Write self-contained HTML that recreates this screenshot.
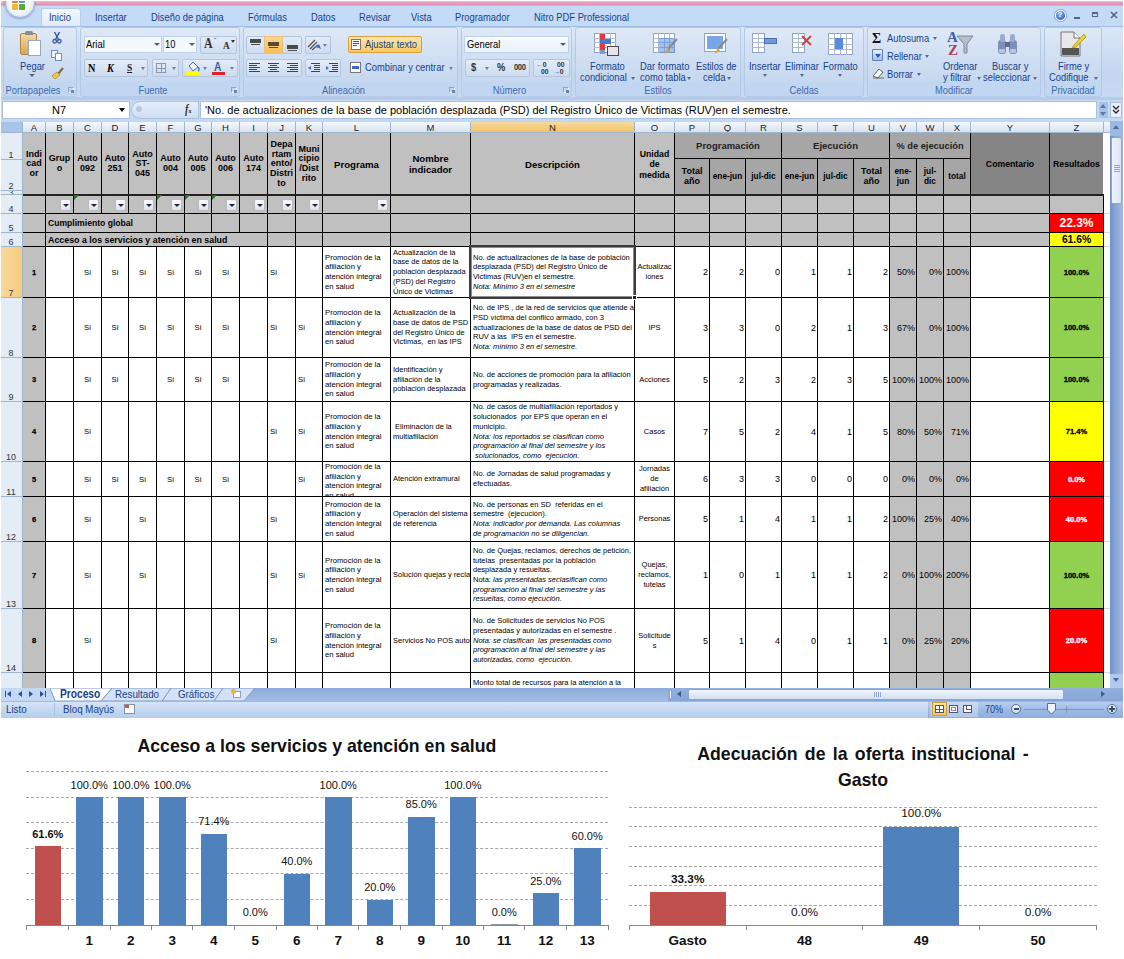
<!DOCTYPE html>
<html><head><meta charset="utf-8"><title>Excel</title><style>
html,body{margin:0;padding:0;}
body{width:1124px;height:959px;background:#fff;overflow:hidden;position:relative;font-family:"Liberation Sans",sans-serif;}
#w{position:absolute;left:0;top:0;width:1124px;height:959px;overflow:hidden;}
.b{position:absolute;}
.t{position:absolute;white-space:nowrap;line-height:1.2;}
.gl{height:0;border-top:1px dashed #a6a6a6;}
.rt{transform:scaleX(.85);transform-origin:0 50%;}
.rc{transform:scaleX(.85);transform-origin:50% 50%;}
.c{position:absolute;overflow:hidden;display:flex;align-items:center;color:#000;box-sizing:border-box;}
.c.hc{justify-content:center;text-align:center;}
.c.hh{padding-top:1.5px;}
.c.l{justify-content:flex-start;text-align:left;}
.c.rr{justify-content:flex-end;text-align:right;}
.c.colh{align-items:center;}
.c.rowh{justify-content:center;align-items:flex-end;}
.fb{position:absolute;width:11px;height:12px;box-sizing:border-box;border:1px solid #b8bcc4;border-radius:2px;background:linear-gradient(#fbfbfc,#dfe2e8);}
.fb i{position:absolute;left:1.5px;top:3.5px;width:0;height:0;border-left:3px solid transparent;border-right:3px solid transparent;border-top:3.5px solid #1c2340;}
</style></head><body><div id="w">
<div class="b" style="left:0px;top:0px;width:1124px;height:718px;background:#bfd7f5;"></div>
<div class="b" style="left:0px;top:0px;width:1124px;height:5.5px;background:linear-gradient(#f6dbe6,#eaa6c3 35%,#e292b6 75%,#dcb6d6);"></div>
<div class="b" style="left:0px;top:5.5px;width:1124px;height:20.5px;background:#c4dbf8;"></div>
<div class="b" style="left:5px;top:-12px;width:28px;height:28px;border-radius:50%;background:radial-gradient(circle at 50% 45%,#ffffff,#f1f5fb 55%,#c3d3ea);border:1px solid #9fb4d4;box-shadow:0 1px 2px rgba(80,100,140,.5)"></div>
<div class="b" style="left:12px;top:4px;width:6px;height:6px;background:#f0b33a;border-radius:1px"></div>
<div class="b" style="left:19px;top:4px;width:6px;height:6px;background:#5fa83c;border-radius:1px"></div>
<div class="b" style="left:12px;top:-3px;width:6px;height:6px;background:#e4812a;border-radius:1px"></div>
<div class="b" style="left:19px;top:-3px;width:6px;height:6px;background:#5f8fd0;border-radius:1px"></div>
<div class="b" style="left:41px;top:8px;width:40px;height:18px;background:linear-gradient(#f3f7fd,#e1ebf8);border:1px solid #b7cde9;border-bottom:none;border-radius:3px 3px 0 0;box-sizing:border-box;"></div>
<div class="t rt" style="left:49px;top:11px;font-size:11px;color:#15428b;">Inicio</div>
<div class="t rt" style="left:95px;top:11px;font-size:11px;color:#15428b;">Insertar</div>
<div class="t rt" style="left:151px;top:11px;font-size:11px;color:#15428b;">Diseño de página</div>
<div class="t rt" style="left:248px;top:11px;font-size:11px;color:#15428b;">Fórmulas</div>
<div class="t rt" style="left:311px;top:11px;font-size:11px;color:#15428b;">Datos</div>
<div class="t rt" style="left:359px;top:11px;font-size:11px;color:#15428b;">Revisar</div>
<div class="t rt" style="left:411px;top:11px;font-size:11px;color:#15428b;">Vista</div>
<div class="t rt" style="left:455px;top:11px;font-size:11px;color:#15428b;">Programador</div>
<div class="t rt" style="left:534px;top:11px;font-size:11px;color:#15428b;">Nitro PDF Professional</div>
<div class="b" style="left:1055px;top:10px;width:9px;height:9px;border-radius:50%;background:radial-gradient(circle at 40% 35%,#7fb2f0,#1f55c0);border:1px solid #fff;box-shadow:0 0 0 1px #8aa8d8"></div>
<div class="t" style="left:1057.5px;top:9.5px;font-size:8px;font-weight:bold;color:#fff;">?</div>
<div class="b" style="left:1074px;top:17px;width:6px;height:2px;background:#55657f;"></div>
<div class="b" style="left:1092px;top:12px;width:6px;height:5px;border:1px solid #55657f;border-top:2px solid #55657f;box-sizing:border-box;background:transparent"></div>
<svg class="b" style="left:1110px;top:11px" width="8" height="8"><path d="M1 1L7 7M7 1L1 7" stroke="#55657f" stroke-width="1.6"/></svg>
<div class="b" style="left:0px;top:26px;width:1124px;height:72px;background:linear-gradient(#dbe7f7,#cfdff3 30%,#c3d6ef 70%,#c9dbf2);border-top:1px solid #9dbbe2;"></div>
<div class="b" style="left:0px;top:97px;width:1124px;height:3px;background:#b5cbe8;"></div>
<div class="b" style="left:3px;top:27px;width:74px;height:70px;border:1px solid #b4c9e6;border-radius:3px;background:linear-gradient(#dfe9f7,#d2e0f3 40%,#c6d8ef 78%,#c2d6f0 79%,#c2d6f0);box-sizing:border-box;"></div>
<div class="b" style="left:4px;top:84px;width:72px;height:11px;background:#c1d6f1;border-radius:0 0 3px 3px;"></div>
<div class="t rc" style="left:-4px;top:84px;width:74px;text-align:center;font-size:11px;color:#3e6aaa;">Portapapeles</div>
<div class="b" style="left:80px;top:27px;width:160px;height:70px;border:1px solid #b4c9e6;border-radius:3px;background:linear-gradient(#dfe9f7,#d2e0f3 40%,#c6d8ef 78%,#c2d6f0 79%,#c2d6f0);box-sizing:border-box;"></div>
<div class="b" style="left:81px;top:84px;width:158px;height:11px;background:#c1d6f1;border-radius:0 0 3px 3px;"></div>
<div class="t rc" style="left:73px;top:84px;width:160px;text-align:center;font-size:11px;color:#3e6aaa;">Fuente</div>
<div class="b" style="left:243px;top:27px;width:215px;height:70px;border:1px solid #b4c9e6;border-radius:3px;background:linear-gradient(#dfe9f7,#d2e0f3 40%,#c6d8ef 78%,#c2d6f0 79%,#c2d6f0);box-sizing:border-box;"></div>
<div class="b" style="left:244px;top:84px;width:213px;height:11px;background:#c1d6f1;border-radius:0 0 3px 3px;"></div>
<div class="t rc" style="left:236px;top:84px;width:215px;text-align:center;font-size:11px;color:#3e6aaa;">Alineación</div>
<div class="b" style="left:461px;top:27px;width:111px;height:70px;border:1px solid #b4c9e6;border-radius:3px;background:linear-gradient(#dfe9f7,#d2e0f3 40%,#c6d8ef 78%,#c2d6f0 79%,#c2d6f0);box-sizing:border-box;"></div>
<div class="b" style="left:462px;top:84px;width:109px;height:11px;background:#c1d6f1;border-radius:0 0 3px 3px;"></div>
<div class="t rc" style="left:454px;top:84px;width:111px;text-align:center;font-size:11px;color:#3e6aaa;">Número</div>
<div class="b" style="left:575px;top:27px;width:166px;height:70px;border:1px solid #b4c9e6;border-radius:3px;background:linear-gradient(#dfe9f7,#d2e0f3 40%,#c6d8ef 78%,#c2d6f0 79%,#c2d6f0);box-sizing:border-box;"></div>
<div class="b" style="left:576px;top:84px;width:164px;height:11px;background:#c1d6f1;border-radius:0 0 3px 3px;"></div>
<div class="t rc" style="left:575px;top:84px;width:166px;text-align:center;font-size:11px;color:#3e6aaa;">Estilos</div>
<div class="b" style="left:744px;top:27px;width:120px;height:70px;border:1px solid #b4c9e6;border-radius:3px;background:linear-gradient(#dfe9f7,#d2e0f3 40%,#c6d8ef 78%,#c2d6f0 79%,#c2d6f0);box-sizing:border-box;"></div>
<div class="b" style="left:745px;top:84px;width:118px;height:11px;background:#c1d6f1;border-radius:0 0 3px 3px;"></div>
<div class="t rc" style="left:744px;top:84px;width:120px;text-align:center;font-size:11px;color:#3e6aaa;">Celdas</div>
<div class="b" style="left:867px;top:27px;width:174px;height:70px;border:1px solid #b4c9e6;border-radius:3px;background:linear-gradient(#dfe9f7,#d2e0f3 40%,#c6d8ef 78%,#c2d6f0 79%,#c2d6f0);box-sizing:border-box;"></div>
<div class="b" style="left:868px;top:84px;width:172px;height:11px;background:#c1d6f1;border-radius:0 0 3px 3px;"></div>
<div class="t rc" style="left:867px;top:84px;width:174px;text-align:center;font-size:11px;color:#3e6aaa;">Modificar</div>
<div class="b" style="left:1044px;top:27px;width:58px;height:70px;border:1px solid #b4c9e6;border-radius:3px;background:linear-gradient(#dfe9f7,#d2e0f3 40%,#c6d8ef 78%,#c2d6f0 79%,#c2d6f0);box-sizing:border-box;"></div>
<div class="b" style="left:1045px;top:84px;width:56px;height:11px;background:#c1d6f1;border-radius:0 0 3px 3px;"></div>
<div class="t rc" style="left:1044px;top:84px;width:58px;text-align:center;font-size:11px;color:#3e6aaa;">Privacidad</div>
<div class="b" style="left:68px;top:87px;width:6px;height:6px;border:1px solid #8ea6c8;border-right-color:#fff;border-bottom-color:#fff;box-sizing:border-box;"></div>
<div class="b" style="left:71px;top:90px;width:3px;height:3px;background:#6b84ab;"></div>
<div class="b" style="left:231px;top:87px;width:6px;height:6px;border:1px solid #8ea6c8;border-right-color:#fff;border-bottom-color:#fff;box-sizing:border-box;"></div>
<div class="b" style="left:234px;top:90px;width:3px;height:3px;background:#6b84ab;"></div>
<div class="b" style="left:449px;top:87px;width:6px;height:6px;border:1px solid #8ea6c8;border-right-color:#fff;border-bottom-color:#fff;box-sizing:border-box;"></div>
<div class="b" style="left:452px;top:90px;width:3px;height:3px;background:#6b84ab;"></div>
<div class="b" style="left:563px;top:87px;width:6px;height:6px;border:1px solid #8ea6c8;border-right-color:#fff;border-bottom-color:#fff;box-sizing:border-box;"></div>
<div class="b" style="left:566px;top:90px;width:3px;height:3px;background:#6b84ab;"></div>
<div class="b" style="left:20px;top:33px;width:17px;height:22px;background:linear-gradient(#f3d9a0,#d9a755);border:1px solid #b08540;border-radius:2px;box-sizing:border-box;"></div>
<div class="b" style="left:25px;top:31px;width:8px;height:4px;background:#8c8c8c;border-radius:2px 2px 0 0;"></div>
<div class="b" style="left:28px;top:40px;width:13px;height:16px;background:#fff;border:1px solid #9aa7b8;box-sizing:border-box;"></div>
<div class="t rt" style="left:19.5px;top:60px;font-size:11px;color:#15428b;">Pegar</div>
<div class="b" style="left:29px;top:74px;border-left:3px solid transparent;border-right:3px solid transparent;border-top:3px solid #566a8a;width:0;height:0"></div>
<svg class="b" style="left:52px;top:32px" width="10" height="12"><path d="M2.5 0L6.5 7.5M7.5 0L3.5 7.5" stroke="#3b5e9c" stroke-width="1.5" fill="none"/><circle cx="2.7" cy="9.3" r="1.8" fill="none" stroke="#3b5e9c" stroke-width="1.3"/><circle cx="7.3" cy="9.3" r="1.8" fill="none" stroke="#3b5e9c" stroke-width="1.3"/></svg>
<div class="b" style="left:51px;top:50px;width:7px;height:8px;background:#e9f0fa;border:1px solid #6e8fc6;box-sizing:border-box;"></div>
<div class="b" style="left:55px;top:53px;width:7px;height:8px;background:#fff;border:1px solid #6e8fc6;box-sizing:border-box;"></div>
<svg class="b" style="left:51px;top:67px" width="14" height="13"><path d="M12 1L7 7" stroke="#7a6a3a" stroke-width="2"/><path d="M1 9L6 5L9 8L4 12Z" fill="#f0c84a" stroke="#b38f20" stroke-width=".8"/></svg>
<div class="b" style="left:84px;top:36px;width:78px;height:17px;background:#f4f8fd;border:1px solid #c0d2ea;box-sizing:border-box;"></div>
<div class="t rt" style="left:86px;top:38px;font-size:11px;color:#000;">Arial</div>
<div class="b" style="left:154px;top:43px;border-left:3px solid transparent;border-right:3px solid transparent;border-top:3px solid #4d607e;width:0;height:0"></div>
<div class="b" style="left:163px;top:36px;width:34px;height:17px;background:#f4f8fd;border:1px solid #c0d2ea;box-sizing:border-box;"></div>
<div class="t rt" style="left:165px;top:38px;font-size:11px;color:#000;">10</div>
<div class="b" style="left:189px;top:43px;border-left:3px solid transparent;border-right:3px solid transparent;border-top:3px solid #4d607e;width:0;height:0"></div>
<div class="b" style="left:200px;top:36px;width:37px;height:18px;border:1px solid #b3c6e0;border-radius:2px;background:linear-gradient(#e3ecf8,#cddcf0);box-sizing:border-box;"></div>
<div class="t rt" style="left:204px;top:36px;font-family:&quot;Liberation Serif&quot;,serif;font-size:14px;font-weight:bold;color:#333;">A</div>
<div class="t rt" style="left:214px;top:36px;font-size:8px;color:#333;">ˆ</div>
<div class="t rt" style="left:223px;top:39px;font-family:&quot;Liberation Serif&quot;,serif;font-size:11px;font-weight:bold;color:#333;">A</div>
<div class="b" style="left:231px;top:40px;border-left:2px solid transparent;border-right:2px solid transparent;border-top:3px solid #333;width:0;height:0"></div>
<div class="b" style="left:84px;top:59px;width:64px;height:18px;border:1px solid #b3c6e0;border-radius:2px;background:linear-gradient(#e3ecf8,#cddcf0);box-sizing:border-box;"></div>
<div class="t rt" style="left:88px;top:61px;font-family:&quot;Liberation Serif&quot;,serif;font-size:12px;font-weight:bold;color:#000;">N</div>
<div class="t rt" style="left:107px;top:61px;font-family:&quot;Liberation Serif&quot;,serif;font-size:12px;font-weight:bold;font-style:italic;color:#000;">K</div>
<div class="t rt" style="left:127px;top:61px;font-family:&quot;Liberation Serif&quot;,serif;font-size:11px;font-weight:bold;text-decoration:underline;color:#222;">S</div>
<div class="b" style="left:141px;top:67px;border-left:2.5px solid transparent;border-right:2.5px solid transparent;border-top:3px solid #6b7f9f;width:0;height:0"></div>
<div class="b" style="left:152px;top:59px;width:27px;height:18px;border:1px solid #b3c6e0;border-radius:2px;background:linear-gradient(#e3ecf8,#cddcf0);box-sizing:border-box;"></div>
<div class="b" style="left:156px;top:63px;width:10px;height:10px;border:1px solid #8b98ad;box-sizing:border-box;background:linear-gradient(90deg,transparent 4px,#8b98ad 4px,#8b98ad 5px,transparent 5px),linear-gradient(transparent 4px,#8b98ad 4px,#8b98ad 5px,transparent 5px)"></div>
<div class="b" style="left:172px;top:67px;border-left:2.5px solid transparent;border-right:2.5px solid transparent;border-top:3px solid #6b7f9f;width:0;height:0"></div>
<div class="b" style="left:182px;top:59px;width:56px;height:18px;border:1px solid #b3c6e0;border-radius:2px;background:linear-gradient(#e3ecf8,#cddcf0);box-sizing:border-box;"></div>
<svg class="b" style="left:185px;top:61px" width="16" height="14"><path d="M4 5L8 1L13 6L8 10Z" fill="#eef2f8" stroke="#5a6c8a" stroke-width="1"/><path d="M13 6q2 3 0 4" stroke="#4a78c4" stroke-width="1.5" fill="none"/><rect x="1" y="11" width="13" height="3" fill="#ffff00"/></svg>
<div class="b" style="left:203px;top:67px;border-left:2.5px solid transparent;border-right:2.5px solid transparent;border-top:3px solid #6b7f9f;width:0;height:0"></div>
<div class="t rt" style="left:214px;top:59.7px;font-size:12px;font-weight:bold;color:#3a5a9c;">A</div>
<div class="b" style="left:212px;top:72px;width:13px;height:3px;background:#e0202a;"></div>
<div class="b" style="left:230px;top:67px;border-left:2.5px solid transparent;border-right:2.5px solid transparent;border-top:3px solid #6b7f9f;width:0;height:0"></div>
<div class="b" style="left:246px;top:36px;width:56px;height:18px;border:1px solid #b3c6e0;border-radius:2px;background:linear-gradient(#e3ecf8,#cddcf0);box-sizing:border-box;"></div>
<div class="b" style="left:264px;top:36px;width:19px;height:18px;background:linear-gradient(#fbd58f,#f9bd55);border:1px solid #ecc27a;box-sizing:border-box;"></div>
<div class="b" style="left:250.0px;top:39.0px;width:11px;height:1.5px;background:#4a4a4a"></div><div class="b" style="left:250.0px;top:41.3px;width:11px;height:1.5px;background:#4a4a4a"></div><div class="b" style="left:251.0px;top:43.6px;width:9px;height:1.5px;background:#4a4a4a"></div>
<div class="b" style="left:268.0px;top:42.0px;width:11px;height:1.5px;background:#5a4a30"></div><div class="b" style="left:268.0px;top:44.3px;width:11px;height:1.5px;background:#5a4a30"></div><div class="b" style="left:269.0px;top:46.6px;width:9px;height:1.5px;background:#5a4a30"></div>
<div class="b" style="left:287.0px;top:45.0px;width:11px;height:1.5px;background:#4a4a4a"></div><div class="b" style="left:287.0px;top:47.3px;width:11px;height:1.5px;background:#4a4a4a"></div><div class="b" style="left:288.0px;top:49.6px;width:9px;height:1.5px;background:#4a4a4a"></div>
<div class="b" style="left:305px;top:36px;width:26px;height:18px;border:1px solid #b3c6e0;border-radius:2px;background:linear-gradient(#e3ecf8,#cddcf0);box-sizing:border-box;"></div>
<svg class="b" style="left:307px;top:38px" width="16" height="14"><path d="M1 9L8 2M3 11L10 4M5 12L11 7" stroke="#555" stroke-width="1.3"/><path d="M9 9L14 11L12 6Z" fill="#3c6cc0"/></svg>
<div class="b" style="left:323px;top:44px;border-left:2.5px solid transparent;border-right:2.5px solid transparent;border-top:3px solid #6b7f9f;width:0;height:0"></div>
<div class="b" style="left:246px;top:59px;width:56px;height:18px;border:1px solid #b3c6e0;border-radius:2px;background:linear-gradient(#e3ecf8,#cddcf0);box-sizing:border-box;"></div>
<div class="b" style="left:249px;top:63.0px;width:11px;height:1.1px;background:#444"></div><div class="b" style="left:249px;top:65.1px;width:8px;height:1.1px;background:#444"></div><div class="b" style="left:249px;top:67.2px;width:11px;height:1.1px;background:#444"></div><div class="b" style="left:249px;top:69.3px;width:8px;height:1.1px;background:#444"></div><div class="b" style="left:249px;top:71.4px;width:11px;height:1.1px;background:#444"></div>
<div class="b" style="left:268.0px;top:63.0px;width:11px;height:1.1px;background:#444"></div><div class="b" style="left:270.0px;top:65.1px;width:7px;height:1.1px;background:#444"></div><div class="b" style="left:268.0px;top:67.2px;width:11px;height:1.1px;background:#444"></div><div class="b" style="left:270.0px;top:69.3px;width:7px;height:1.1px;background:#444"></div><div class="b" style="left:268.0px;top:71.4px;width:11px;height:1.1px;background:#444"></div>
<div class="b" style="left:287px;top:63.0px;width:11px;height:1.1px;background:#444"></div><div class="b" style="left:290px;top:65.1px;width:8px;height:1.1px;background:#444"></div><div class="b" style="left:287px;top:67.2px;width:11px;height:1.1px;background:#444"></div><div class="b" style="left:290px;top:69.3px;width:8px;height:1.1px;background:#444"></div><div class="b" style="left:287px;top:71.4px;width:11px;height:1.1px;background:#444"></div>
<div class="b" style="left:305px;top:59px;width:36px;height:18px;border:1px solid #b3c6e0;border-radius:2px;background:linear-gradient(#e3ecf8,#cddcf0);box-sizing:border-box;"></div>
<div class="b" style="left:311px;top:63.0px;width:9px;height:1.1px;background:#444"></div><div class="b" style="left:314px;top:65.1px;width:6px;height:1.1px;background:#444"></div><div class="b" style="left:314px;top:67.2px;width:6px;height:1.1px;background:#444"></div><div class="b" style="left:314px;top:69.3px;width:6px;height:1.1px;background:#444"></div><div class="b" style="left:311px;top:71.4px;width:9px;height:1.1px;background:#444"></div>
<div class="b" style="left:329px;top:63.0px;width:9px;height:1.1px;background:#444"></div><div class="b" style="left:332px;top:65.1px;width:6px;height:1.1px;background:#444"></div><div class="b" style="left:332px;top:67.2px;width:6px;height:1.1px;background:#444"></div><div class="b" style="left:332px;top:69.3px;width:6px;height:1.1px;background:#444"></div><div class="b" style="left:329px;top:71.4px;width:9px;height:1.1px;background:#444"></div>
<div class="b" style="left:308px;top:66px;border-top:2.5px solid transparent;border-bottom:2.5px solid transparent;border-right:3px solid #3c6cc0;width:0;height:0"></div>
<div class="b" style="left:326px;top:66px;border-top:2.5px solid transparent;border-bottom:2.5px solid transparent;border-left:3px solid #3c6cc0;width:0;height:0"></div>
<div class="b" style="left:348px;top:36px;width:74px;height:17px;background:linear-gradient(#fde7b0,#fbc860);border:1px solid #dba03a;border-radius:2px;box-sizing:border-box;"></div>
<div class="b" style="left:351px;top:39px;width:10px;height:11px;border:1px solid #777;background:#fff;box-sizing:border-box;"></div>
<div class="b" style="left:353px;top:41px;width:6px;height:1px;background:#555"></div><div class="b" style="left:353px;top:43px;width:6px;height:1px;background:#555"></div><div class="b" style="left:353px;top:45px;width:4px;height:1px;background:#555"></div>
<div class="t rt" style="left:365px;top:38px;font-size:11px;color:#15428b;">Ajustar texto</div>
<div class="b" style="left:350px;top:62px;width:11px;height:11px;border:1px solid #777;background:#fff;box-sizing:border-box;"></div>
<div class="b" style="left:352px;top:66px;width:7px;height:3px;background:#3c6cc0;"></div>
<div class="t rt" style="left:365px;top:61px;font-size:11px;color:#15428b;">Combinar y centrar</div>
<div class="b" style="left:449px;top:67px;border-left:2.5px solid transparent;border-right:2.5px solid transparent;border-top:3px solid #6b7f9f;width:0;height:0"></div>
<div class="b" style="left:464px;top:36px;width:105px;height:17px;border:1px solid #c0d2ea;box-sizing:border-box;background:linear-gradient(#f8fbfe,#eaf1fa)"></div>
<div class="t rt" style="left:467px;top:38px;font-size:11px;color:#000;">General</div>
<div class="b" style="left:560px;top:43px;border-left:3px solid transparent;border-right:3px solid transparent;border-top:3px solid #4d607e;width:0;height:0"></div>
<div class="b" style="left:465px;top:59px;width:65px;height:18px;border:1px solid #b3c6e0;border-radius:2px;background:linear-gradient(#e3ecf8,#cddcf0);box-sizing:border-box;"></div>
<div class="t rt" style="left:471px;top:61px;font-size:11px;font-weight:bold;color:#333;">$</div>
<div class="b" style="left:485px;top:67px;border-left:2.5px solid transparent;border-right:2.5px solid transparent;border-top:3px solid #6b7f9f;width:0;height:0"></div>
<div class="t rt" style="left:497px;top:61px;font-size:11px;font-weight:bold;color:#333;">%</div>
<div class="t rt" style="left:514px;top:62px;font-size:9px;font-weight:bold;color:#333;letter-spacing:-0.5px;">000</div>
<div class="b" style="left:533px;top:59px;width:37px;height:18px;border:1px solid #b3c6e0;border-radius:2px;background:linear-gradient(#e3ecf8,#cddcf0);box-sizing:border-box;"></div>
<div class="t rt" style="left:536px;top:60px;font-size:8px;font-weight:bold;color:#333;"><span style="color:#3c6cc0">←</span>0</div>
<div class="t rt" style="left:541px;top:67px;font-size:8px;font-weight:bold;color:#333;">00</div>
<div class="t rt" style="left:557px;top:60px;font-size:8px;font-weight:bold;color:#333;">00</div>
<div class="t rt" style="left:553px;top:67px;font-size:8px;font-weight:bold;color:#333;"><span style="color:#3c6cc0">→</span>0</div>
<div class="b" style="left:594px;top:33px;width:22px;height:20px;background:#fff;border:1px solid #8fa3c2;box-sizing:border-box;"></div>
<div class="b" style="left:599px;top:33px;width:1px;height:20px;background:#a9b9d2;"></div>
<div class="b" style="left:604px;top:33px;width:1px;height:20px;background:#a9b9d2;"></div>
<div class="b" style="left:610px;top:33px;width:1px;height:20px;background:#a9b9d2;"></div>
<div class="b" style="left:594px;top:38px;width:22px;height:1px;background:#a9b9d2;"></div>
<div class="b" style="left:594px;top:42px;width:22px;height:1px;background:#a9b9d2;"></div>
<div class="b" style="left:594px;top:47px;width:22px;height:1px;background:#a9b9d2;"></div>
<div class="b" style="left:600px;top:34px;width:5px;height:5px;background:#e03a3a;"></div>
<div class="b" style="left:600px;top:44px;width:5px;height:6px;background:#e03a3a;"></div>
<div class="b" style="left:600px;top:39px;width:11px;height:5px;background:#4a78d0;"></div>
<div class="b" style="left:600px;top:50px;width:5px;height:4px;background:#7a9ad8;"></div>
<div class="b" style="left:607px;top:46px;width:12px;height:10px;background:#e4e6ea;border:1px solid #4a4a4a;box-sizing:border-box;"></div>
<div class="t rt" style="left:589.5px;top:59.7px;font-size:11px;color:#15428b;">Formato</div>
<div class="t rt" style="left:580px;top:70.7px;font-size:11px;color:#15428b;">condicional</div>
<div class="b" style="left:631px;top:77px;border-left:2.5px solid transparent;border-right:2.5px solid transparent;border-top:3px solid #566a8a;width:0;height:0"></div>
<div class="b" style="left:653px;top:33px;width:22px;height:20px;background:#fff;border:1px solid #8fa3c2;box-sizing:border-box;"></div>
<div class="b" style="left:658px;top:33px;width:1px;height:20px;background:#a9b9d2;"></div>
<div class="b" style="left:664px;top:33px;width:1px;height:20px;background:#a9b9d2;"></div>
<div class="b" style="left:669px;top:33px;width:1px;height:20px;background:#a9b9d2;"></div>
<div class="b" style="left:653px;top:38px;width:22px;height:1px;background:#a9b9d2;"></div>
<div class="b" style="left:653px;top:42px;width:22px;height:1px;background:#a9b9d2;"></div>
<div class="b" style="left:653px;top:47px;width:22px;height:1px;background:#a9b9d2;"></div>
<div class="b" style="left:659px;top:38px;width:16px;height:15px;background:rgba(90,140,220,.55);"></div>
<svg class="b" style="left:662px;top:38px" width="18" height="18"><path d="M15 1L6 11" stroke="#8a8a8a" stroke-width="2"/><path d="M6 10L2 16L8 13Z" fill="#d9a040"/></svg>
<div class="t rt" style="left:640px;top:59.7px;font-size:11px;color:#15428b;">Dar formato</div>
<div class="t rt" style="left:639.5px;top:70.7px;font-size:11px;color:#15428b;">como tabla</div>
<div class="b" style="left:687px;top:77px;border-left:2.5px solid transparent;border-right:2.5px solid transparent;border-top:3px solid #566a8a;width:0;height:0"></div>
<div class="b" style="left:704px;top:33px;width:22px;height:19px;background:#fff;border:1px solid #8fa3c2;box-sizing:border-box;"></div>
<div class="b" style="left:707px;top:36px;width:16px;height:13px;background:#7aa5e8;"></div>
<svg class="b" style="left:712px;top:38px" width="18" height="18"><path d="M15 1L6 11" stroke="#8a8a8a" stroke-width="2"/><path d="M6 10L2 16L8 13Z" fill="#d9a040"/></svg>
<div class="t rt" style="left:696px;top:59.7px;font-size:11px;color:#15428b;">Estilos de</div>
<div class="t rt" style="left:703px;top:70.7px;font-size:11px;color:#15428b;">celda</div>
<div class="b" style="left:727px;top:77px;border-left:2.5px solid transparent;border-right:2.5px solid transparent;border-top:3px solid #566a8a;width:0;height:0"></div>
<div class="b" style="left:752px;top:33px;width:13px;height:20px;background:#fff;border:1px solid #8fa3c2;box-sizing:border-box;"></div>
<div class="b" style="left:758px;top:33px;width:1px;height:20px;background:#a9b9d2;"></div>
<div class="b" style="left:752px;top:38px;width:13px;height:1px;background:#a9b9d2;"></div>
<div class="b" style="left:752px;top:42px;width:13px;height:1px;background:#a9b9d2;"></div>
<div class="b" style="left:752px;top:47px;width:13px;height:1px;background:#a9b9d2;"></div>
<div class="b" style="left:764px;top:38px;width:13px;height:6px;background:#6f9ae0;border:1px solid #4a70b8;box-sizing:border-box;"></div>
<div class="t rt" style="left:749px;top:59.7px;font-size:11px;color:#15428b;">Insertar</div>
<div class="b" style="left:792px;top:33px;width:13px;height:20px;background:#fff;border:1px solid #8fa3c2;box-sizing:border-box;"></div>
<div class="b" style="left:798px;top:33px;width:1px;height:20px;background:#a9b9d2;"></div>
<div class="b" style="left:792px;top:38px;width:13px;height:1px;background:#a9b9d2;"></div>
<div class="b" style="left:792px;top:42px;width:13px;height:1px;background:#a9b9d2;"></div>
<div class="b" style="left:792px;top:47px;width:13px;height:1px;background:#a9b9d2;"></div>
<svg class="b" style="left:801px;top:35px" width="12" height="12"><path d="M1 1L10 10M10 1L1 10" stroke="#e03a2a" stroke-width="1.8"/></svg>
<div class="t rt" style="left:785px;top:59.7px;font-size:11px;color:#15428b;">Eliminar</div>
<div class="b" style="left:828px;top:33px;width:25px;height:22px;background:#fff;border:1px solid #8fa3c2;box-sizing:border-box;"></div>
<div class="b" style="left:834px;top:33px;width:1px;height:22px;background:#a9b9d2;"></div>
<div class="b" style="left:840px;top:33px;width:1px;height:22px;background:#a9b9d2;"></div>
<div class="b" style="left:846px;top:33px;width:1px;height:22px;background:#a9b9d2;"></div>
<div class="b" style="left:828px;top:38px;width:25px;height:1px;background:#a9b9d2;"></div>
<div class="b" style="left:828px;top:44px;width:25px;height:1px;background:#a9b9d2;"></div>
<div class="b" style="left:828px;top:49px;width:25px;height:1px;background:#a9b9d2;"></div>
<div class="b" style="left:835px;top:38px;width:8px;height:11px;background:#5a8ae0;"></div>
<div class="t rt" style="left:823px;top:59.7px;font-size:11px;color:#15428b;">Formato</div>
<div class="b" style="left:763px;top:74px;border-left:2.5px solid transparent;border-right:2.5px solid transparent;border-top:3px solid #566a8a;width:0;height:0"></div>
<div class="b" style="left:800px;top:74px;border-left:2.5px solid transparent;border-right:2.5px solid transparent;border-top:3px solid #566a8a;width:0;height:0"></div>
<div class="b" style="left:838px;top:74px;border-left:2.5px solid transparent;border-right:2.5px solid transparent;border-top:3px solid #566a8a;width:0;height:0"></div>
<div class="t" style="left:872px;top:30.5px;font-family:&quot;Liberation Serif&quot;,serif;font-size:14px;font-weight:bold;color:#111;">Σ</div>
<div class="t rt" style="left:887px;top:32px;font-size:11px;color:#15428b;">Autosuma</div>
<div class="b" style="left:933px;top:37px;border-left:2.5px solid transparent;border-right:2.5px solid transparent;border-top:3px solid #566a8a;width:0;height:0"></div>
<div class="b" style="left:872px;top:49px;width:11px;height:12px;background:linear-gradient(#eaf1fb,#9fc0ee);border:1px solid #5a7fbf;box-sizing:border-box;border-radius:1px"></div>
<div class="b" style="left:875px;top:54px;border-left:3px solid transparent;border-right:3px solid transparent;border-top:4px solid #2a58b0;width:0;height:0"></div>
<div class="t rt" style="left:887px;top:50px;font-size:11px;color:#15428b;">Rellenar</div>
<div class="b" style="left:925px;top:55px;border-left:2.5px solid transparent;border-right:2.5px solid transparent;border-top:3px solid #566a8a;width:0;height:0"></div>
<svg class="b" style="left:872px;top:68px" width="13" height="11"><path d="M1 8L7 1L11 4L6 10Z" fill="#fff" stroke="#666" stroke-width="1"/><path d="M1 10H12" stroke="#666"/></svg>
<div class="t rt" style="left:887px;top:68px;font-size:11px;color:#15428b;">Borrar</div>
<div class="b" style="left:917px;top:73px;border-left:2.5px solid transparent;border-right:2.5px solid transparent;border-top:3px solid #566a8a;width:0;height:0"></div>
<div class="t" style="left:947px;top:28px;font-family:&quot;Liberation Serif&quot;,serif;font-size:15px;font-weight:bold;color:#3a62b0;">A</div>
<div class="t" style="left:948px;top:41px;font-family:&quot;Liberation Serif&quot;,serif;font-size:15px;font-weight:bold;color:#a8405a;">Z</div>
<svg class="b" style="left:956px;top:35px" width="18" height="20"><path d="M1 1H17L11 9V18L8 18V9Z" fill="#b9bfc8" stroke="#808893" stroke-width="1"/></svg>
<div class="t rt" style="left:943px;top:59.7px;font-size:11px;color:#15428b;">Ordenar</div>
<div class="t rt" style="left:943px;top:70.7px;font-size:11px;color:#15428b;">y filtrar</div>
<div class="b" style="left:977px;top:77px;border-left:2.5px solid transparent;border-right:2.5px solid transparent;border-top:3px solid #566a8a;width:0;height:0"></div>
<svg class="b" style="left:995px;top:32px" width="26" height="24"><rect x="3" y="8" width="8" height="14" rx="3" fill="#7b8fb8"/><rect x="14" y="8" width="8" height="14" rx="3" fill="#7b8fb8"/><rect x="5" y="2" width="5" height="8" rx="2" fill="#9aabcc"/><rect x="15" y="2" width="5" height="8" rx="2" fill="#9aabcc"/><rect x="10" y="10" width="5" height="5" fill="#5a6c92"/><rect x="4" y="17" width="6" height="4" rx="1" fill="#b8c6e0"/><rect x="15" y="17" width="6" height="4" rx="1" fill="#b8c6e0"/></svg>
<div class="t rt" style="left:992px;top:59.7px;font-size:11px;color:#15428b;">Buscar y</div>
<div class="t rt" style="left:983px;top:70.7px;font-size:11px;color:#15428b;">seleccionar</div>
<div class="b" style="left:1033px;top:77px;border-left:2.5px solid transparent;border-right:2.5px solid transparent;border-top:3px solid #566a8a;width:0;height:0"></div>
<svg class="b" style="left:1058px;top:31px" width="30" height="26"><path d="M3 1H16L22 7V25H3Z" fill="#e8e8e8" stroke="#777"/><path d="M16 1V7H22" fill="#fff" stroke="#777"/><rect x="4" y="17" width="17" height="7" fill="#555"/><path d="M26 3L16 14L14 17L18 16L28 6Z" fill="#f0d030" stroke="#a08a10" stroke-width=".7"/></svg>
<div class="t rt" style="left:1058px;top:59.7px;font-size:11px;color:#15428b;">Firme y</div>
<div class="t rt" style="left:1049px;top:70.7px;font-size:11px;color:#15428b;">Codifique</div>
<div class="b" style="left:1094px;top:77px;border-left:2.5px solid transparent;border-right:2.5px solid transparent;border-top:3px solid #566a8a;width:0;height:0"></div>
<div class="b" style="left:0px;top:100px;width:1124px;height:21px;background:#c4d9f3;"></div>
<div class="b" style="left:2px;top:101px;width:128px;height:18px;background:#fff;border:1px solid #a9c0de;box-sizing:border-box;"></div>
<div class="t" style="left:52px;top:104px;font-size:11px;color:#000;">N7</div>
<div class="b" style="left:119px;top:108px;border-left:3.5px solid transparent;border-right:3.5px solid transparent;border-top:4px solid #000;width:0;height:0"></div>
<div class="b" style="left:131px;top:101px;width:68px;height:18px;background:linear-gradient(#e6eefa,#cfdef2);border:1px solid #a9c0de;border-radius:9px 0 0 9px;box-sizing:border-box;"></div>
<div class="b" style="left:135px;top:105px;width:6px;height:6px;border-radius:50%;background:#b6c6dc;border:1px solid #dfe8f5"></div>
<div class="t rt" style="left:185px;top:102px;font-family:&quot;Liberation Serif&quot;,serif;font-size:12px;font-weight:bold;color:#333;"><i>f</i><span style="font-size:7px">x</span></div>
<div class="b" style="left:200px;top:101px;width:897px;height:18px;background:#fff;border:1px solid #a9c0de;box-sizing:border-box;"></div>
<div class="t" style="left:205px;top:104px;font-size:11px;color:#000;white-space:nowrap;">'No. de actualizaciones de la base de población desplazada (PSD) del Registro Único de Victimas (RUV)en el semestre.</div>
<div class="b" style="left:1099px;top:102px;width:9px;height:16px;background:#a9c2e6;"></div>
<div class="b" style="left:1100px;top:104px;border-left:3.5px solid transparent;border-right:3.5px solid transparent;border-bottom:4px solid #5878b0;width:0;height:0"></div>
<div class="b" style="left:1100px;top:112px;border-left:3.5px solid transparent;border-right:3.5px solid transparent;border-top:4px solid #5878b0;width:0;height:0"></div>
<div class="b" style="left:1110px;top:102px;width:12px;height:16px;background:#e9f0fa;border:1px solid #a9c0de;box-sizing:border-box;"></div>
<svg class="b" style="left:1112px;top:105px" width="8" height="10"><path d="M1 1L4 4L7 1M1 5L4 8L7 5" stroke="#222" stroke-width="1.3" fill="none"/></svg>
<div class="b" style="left:22px;top:132px;width:1088px;height:556px;background:#fff;"></div>
<div class="b" style="left:22px;top:132px;width:652px;height:114px;background:#c0c0c0;"></div>
<div class="b" style="left:674px;top:132px;width:296px;height:62px;background:#a6a6a6;"></div>
<div class="b" style="left:970px;top:132px;width:133px;height:62px;background:#858585;"></div>
<div class="b" style="left:674px;top:194px;width:429px;height:52px;background:#c0c0c0;"></div>
<div class="b" style="left:22px;top:246px;width:23px;height:442px;background:#c0c0c0;"></div>
<div class="b" style="left:889px;top:246px;width:81px;height:442px;background:#c0c0c0;"></div>
<div class="b" style="left:1049px;top:213px;width:54px;height:19px;background:#ff0000;"></div>
<div class="b" style="left:1049px;top:232px;width:54px;height:14px;background:#ffff00;"></div>
<div class="b" style="left:1049px;top:246px;width:54px;height:51px;background:#92d050;"></div>
<div class="b" style="left:1049px;top:297px;width:54px;height:60px;background:#92d050;"></div>
<div class="b" style="left:1049px;top:357px;width:54px;height:44px;background:#92d050;"></div>
<div class="b" style="left:1049px;top:401px;width:54px;height:60px;background:#ffff00;"></div>
<div class="b" style="left:1049px;top:461px;width:54px;height:35px;background:#ff0000;"></div>
<div class="b" style="left:1049px;top:496px;width:54px;height:45px;background:#ff0000;"></div>
<div class="b" style="left:1049px;top:541px;width:54px;height:67px;background:#92d050;"></div>
<div class="b" style="left:1049px;top:608px;width:54px;height:64px;background:#ff0000;"></div>
<div class="b" style="left:1049px;top:672px;width:54px;height:16px;background:#92d050;"></div>
<div class="b" style="left:1104px;top:213px;width:6px;height:1px;background:#d0d7e5;"></div>
<div class="b" style="left:1104px;top:232px;width:6px;height:1px;background:#d0d7e5;"></div>
<div class="b" style="left:1104px;top:246px;width:6px;height:1px;background:#d0d7e5;"></div>
<div class="b" style="left:1104px;top:297px;width:6px;height:1px;background:#d0d7e5;"></div>
<div class="b" style="left:1104px;top:357px;width:6px;height:1px;background:#d0d7e5;"></div>
<div class="b" style="left:1104px;top:401px;width:6px;height:1px;background:#d0d7e5;"></div>
<div class="b" style="left:1104px;top:461px;width:6px;height:1px;background:#d0d7e5;"></div>
<div class="b" style="left:1104px;top:496px;width:6px;height:1px;background:#d0d7e5;"></div>
<div class="b" style="left:1104px;top:541px;width:6px;height:1px;background:#d0d7e5;"></div>
<div class="b" style="left:1104px;top:608px;width:6px;height:1px;background:#d0d7e5;"></div>
<div class="b" style="left:1104px;top:672px;width:6px;height:1px;background:#d0d7e5;"></div>
<div class="b" style="left:45px;top:132px;width:1px;height:62px;background:#000"></div>
<div class="b" style="left:73px;top:132px;width:1px;height:62px;background:#000"></div>
<div class="b" style="left:101px;top:132px;width:1px;height:62px;background:#000"></div>
<div class="b" style="left:128px;top:132px;width:1px;height:62px;background:#000"></div>
<div class="b" style="left:156px;top:132px;width:1px;height:62px;background:#000"></div>
<div class="b" style="left:184px;top:132px;width:1px;height:62px;background:#000"></div>
<div class="b" style="left:211px;top:132px;width:1px;height:62px;background:#000"></div>
<div class="b" style="left:239px;top:132px;width:1px;height:62px;background:#000"></div>
<div class="b" style="left:267px;top:132px;width:1px;height:62px;background:#000"></div>
<div class="b" style="left:295px;top:132px;width:1px;height:62px;background:#000"></div>
<div class="b" style="left:322px;top:132px;width:1px;height:62px;background:#000"></div>
<div class="b" style="left:390px;top:132px;width:1px;height:62px;background:#000"></div>
<div class="b" style="left:470px;top:132px;width:1px;height:62px;background:#000"></div>
<div class="b" style="left:634px;top:132px;width:1px;height:62px;background:#000"></div>
<div class="b" style="left:674px;top:132px;width:1px;height:62px;background:#000"></div>
<div class="b" style="left:709px;top:132px;width:1px;height:62px;background:#000"></div>
<div class="b" style="left:745px;top:132px;width:1px;height:62px;background:#000"></div>
<div class="b" style="left:781px;top:132px;width:1px;height:62px;background:#000"></div>
<div class="b" style="left:817px;top:132px;width:1px;height:62px;background:#000"></div>
<div class="b" style="left:853px;top:132px;width:1px;height:62px;background:#000"></div>
<div class="b" style="left:889px;top:132px;width:1px;height:62px;background:#000"></div>
<div class="b" style="left:916px;top:132px;width:1px;height:62px;background:#000"></div>
<div class="b" style="left:943px;top:132px;width:1px;height:62px;background:#000"></div>
<div class="b" style="left:970px;top:132px;width:1px;height:62px;background:#000"></div>
<div class="b" style="left:1049px;top:132px;width:1px;height:62px;background:#000"></div>
<div class="b" style="left:675px;top:132px;width:106px;height:26px;background:#a6a6a6;"></div>
<div class="b" style="left:782px;top:132px;width:107px;height:26px;background:#a6a6a6;"></div>
<div class="b" style="left:890px;top:132px;width:80px;height:26px;background:#a6a6a6;"></div>
<div class="b" style="left:674px;top:158px;width:297px;height:1px;background:#000"></div>
<div class="b" style="left:45px;top:194px;width:1px;height:19px;background:#000"></div>
<div class="b" style="left:73px;top:194px;width:1px;height:19px;background:#000"></div>
<div class="b" style="left:101px;top:194px;width:1px;height:19px;background:#000"></div>
<div class="b" style="left:128px;top:194px;width:1px;height:19px;background:#000"></div>
<div class="b" style="left:156px;top:194px;width:1px;height:19px;background:#000"></div>
<div class="b" style="left:184px;top:194px;width:1px;height:19px;background:#000"></div>
<div class="b" style="left:211px;top:194px;width:1px;height:19px;background:#000"></div>
<div class="b" style="left:239px;top:194px;width:1px;height:19px;background:#000"></div>
<div class="b" style="left:267px;top:194px;width:1px;height:19px;background:#000"></div>
<div class="b" style="left:295px;top:194px;width:1px;height:19px;background:#000"></div>
<div class="b" style="left:322px;top:194px;width:1px;height:19px;background:#000"></div>
<div class="b" style="left:390px;top:194px;width:1px;height:19px;background:#000"></div>
<div class="b" style="left:470px;top:194px;width:1px;height:19px;background:#000"></div>
<div class="b" style="left:634px;top:194px;width:1px;height:19px;background:#000"></div>
<div class="b" style="left:674px;top:194px;width:1px;height:19px;background:#000"></div>
<div class="b" style="left:709px;top:194px;width:1px;height:19px;background:#000"></div>
<div class="b" style="left:745px;top:194px;width:1px;height:19px;background:#000"></div>
<div class="b" style="left:781px;top:194px;width:1px;height:19px;background:#000"></div>
<div class="b" style="left:817px;top:194px;width:1px;height:19px;background:#000"></div>
<div class="b" style="left:853px;top:194px;width:1px;height:19px;background:#000"></div>
<div class="b" style="left:889px;top:194px;width:1px;height:19px;background:#000"></div>
<div class="b" style="left:916px;top:194px;width:1px;height:19px;background:#000"></div>
<div class="b" style="left:943px;top:194px;width:1px;height:19px;background:#000"></div>
<div class="b" style="left:970px;top:194px;width:1px;height:19px;background:#000"></div>
<div class="b" style="left:1049px;top:194px;width:1px;height:19px;background:#000"></div>
<div class="b" style="left:1103px;top:194px;width:1px;height:19px;background:#000"></div>
<div class="b" style="left:45px;top:213px;width:1px;height:19px;background:#000"></div>
<div class="b" style="left:156px;top:213px;width:1px;height:19px;background:#000"></div>
<div class="b" style="left:184px;top:213px;width:1px;height:19px;background:#000"></div>
<div class="b" style="left:211px;top:213px;width:1px;height:19px;background:#000"></div>
<div class="b" style="left:239px;top:213px;width:1px;height:19px;background:#000"></div>
<div class="b" style="left:267px;top:213px;width:1px;height:19px;background:#000"></div>
<div class="b" style="left:295px;top:213px;width:1px;height:19px;background:#000"></div>
<div class="b" style="left:322px;top:213px;width:1px;height:19px;background:#000"></div>
<div class="b" style="left:390px;top:213px;width:1px;height:19px;background:#000"></div>
<div class="b" style="left:470px;top:213px;width:1px;height:19px;background:#000"></div>
<div class="b" style="left:634px;top:213px;width:1px;height:19px;background:#000"></div>
<div class="b" style="left:674px;top:213px;width:1px;height:19px;background:#000"></div>
<div class="b" style="left:709px;top:213px;width:1px;height:19px;background:#000"></div>
<div class="b" style="left:745px;top:213px;width:1px;height:19px;background:#000"></div>
<div class="b" style="left:781px;top:213px;width:1px;height:19px;background:#000"></div>
<div class="b" style="left:817px;top:213px;width:1px;height:19px;background:#000"></div>
<div class="b" style="left:853px;top:213px;width:1px;height:19px;background:#000"></div>
<div class="b" style="left:889px;top:213px;width:1px;height:19px;background:#000"></div>
<div class="b" style="left:916px;top:213px;width:1px;height:19px;background:#000"></div>
<div class="b" style="left:943px;top:213px;width:1px;height:19px;background:#000"></div>
<div class="b" style="left:970px;top:213px;width:1px;height:19px;background:#000"></div>
<div class="b" style="left:1049px;top:213px;width:1px;height:19px;background:#000"></div>
<div class="b" style="left:1103px;top:213px;width:1px;height:19px;background:#000"></div>
<div class="b" style="left:45px;top:232px;width:1px;height:14px;background:#000"></div>
<div class="b" style="left:267px;top:232px;width:1px;height:14px;background:#000"></div>
<div class="b" style="left:295px;top:232px;width:1px;height:14px;background:#000"></div>
<div class="b" style="left:322px;top:232px;width:1px;height:14px;background:#000"></div>
<div class="b" style="left:390px;top:232px;width:1px;height:14px;background:#000"></div>
<div class="b" style="left:470px;top:232px;width:1px;height:14px;background:#000"></div>
<div class="b" style="left:634px;top:232px;width:1px;height:14px;background:#000"></div>
<div class="b" style="left:674px;top:232px;width:1px;height:14px;background:#000"></div>
<div class="b" style="left:709px;top:232px;width:1px;height:14px;background:#000"></div>
<div class="b" style="left:745px;top:232px;width:1px;height:14px;background:#000"></div>
<div class="b" style="left:781px;top:232px;width:1px;height:14px;background:#000"></div>
<div class="b" style="left:817px;top:232px;width:1px;height:14px;background:#000"></div>
<div class="b" style="left:853px;top:232px;width:1px;height:14px;background:#000"></div>
<div class="b" style="left:889px;top:232px;width:1px;height:14px;background:#000"></div>
<div class="b" style="left:916px;top:232px;width:1px;height:14px;background:#000"></div>
<div class="b" style="left:943px;top:232px;width:1px;height:14px;background:#000"></div>
<div class="b" style="left:970px;top:232px;width:1px;height:14px;background:#000"></div>
<div class="b" style="left:1049px;top:232px;width:1px;height:14px;background:#000"></div>
<div class="b" style="left:1103px;top:232px;width:1px;height:14px;background:#000"></div>
<div class="b" style="left:45px;top:246px;width:1px;height:442px;background:#000"></div>
<div class="b" style="left:73px;top:246px;width:1px;height:442px;background:#000"></div>
<div class="b" style="left:101px;top:246px;width:1px;height:442px;background:#000"></div>
<div class="b" style="left:128px;top:246px;width:1px;height:442px;background:#000"></div>
<div class="b" style="left:156px;top:246px;width:1px;height:442px;background:#000"></div>
<div class="b" style="left:184px;top:246px;width:1px;height:442px;background:#000"></div>
<div class="b" style="left:211px;top:246px;width:1px;height:442px;background:#000"></div>
<div class="b" style="left:239px;top:246px;width:1px;height:442px;background:#000"></div>
<div class="b" style="left:267px;top:246px;width:1px;height:442px;background:#000"></div>
<div class="b" style="left:295px;top:246px;width:1px;height:442px;background:#000"></div>
<div class="b" style="left:322px;top:246px;width:1px;height:442px;background:#000"></div>
<div class="b" style="left:390px;top:246px;width:1px;height:442px;background:#000"></div>
<div class="b" style="left:470px;top:246px;width:1px;height:442px;background:#000"></div>
<div class="b" style="left:634px;top:246px;width:1px;height:442px;background:#000"></div>
<div class="b" style="left:674px;top:246px;width:1px;height:442px;background:#000"></div>
<div class="b" style="left:709px;top:246px;width:1px;height:442px;background:#000"></div>
<div class="b" style="left:745px;top:246px;width:1px;height:442px;background:#000"></div>
<div class="b" style="left:781px;top:246px;width:1px;height:442px;background:#000"></div>
<div class="b" style="left:817px;top:246px;width:1px;height:442px;background:#000"></div>
<div class="b" style="left:853px;top:246px;width:1px;height:442px;background:#000"></div>
<div class="b" style="left:889px;top:246px;width:1px;height:442px;background:#000"></div>
<div class="b" style="left:916px;top:246px;width:1px;height:442px;background:#000"></div>
<div class="b" style="left:943px;top:246px;width:1px;height:442px;background:#000"></div>
<div class="b" style="left:970px;top:246px;width:1px;height:442px;background:#000"></div>
<div class="b" style="left:1049px;top:246px;width:1px;height:442px;background:#000"></div>
<div class="b" style="left:1103px;top:246px;width:1px;height:442px;background:#000"></div>
<div class="b" style="left:22px;top:194px;width:1082px;height:2px;background:#222"></div>
<div class="b" style="left:22px;top:213px;width:1082px;height:1px;background:#000"></div>
<div class="b" style="left:22px;top:232px;width:1082px;height:1px;background:#000"></div>
<div class="b" style="left:22px;top:246px;width:1082px;height:1px;background:#000"></div>
<div class="b" style="left:22px;top:297px;width:1082px;height:1px;background:#000"></div>
<div class="b" style="left:22px;top:357px;width:1082px;height:1px;background:#000"></div>
<div class="b" style="left:22px;top:401px;width:1082px;height:1px;background:#000"></div>
<div class="b" style="left:22px;top:461px;width:1082px;height:1px;background:#000"></div>
<div class="b" style="left:22px;top:496px;width:1082px;height:1px;background:#000"></div>
<div class="b" style="left:22px;top:541px;width:1082px;height:1px;background:#000"></div>
<div class="b" style="left:22px;top:608px;width:1082px;height:1px;background:#000"></div>
<div class="b" style="left:22px;top:672px;width:1082px;height:1px;background:#000"></div>
<div class="c hc hh" style="left:23px;top:133px;width:22px;height:61px;font-weight:bold;font-size:9px;line-height:9.8px;"><span>Indi<br>cad<br>or</span></div>
<div class="c hc hh" style="left:46px;top:133px;width:27px;height:61px;font-weight:bold;font-size:9px;line-height:9.8px;"><span>Grup<br>o</span></div>
<div class="c hc hh" style="left:74px;top:133px;width:27px;height:61px;font-weight:bold;font-size:9px;line-height:9.8px;"><span>Auto<br>092</span></div>
<div class="c hc hh" style="left:102px;top:133px;width:26px;height:61px;font-weight:bold;font-size:9px;line-height:9.8px;"><span>Auto<br>251</span></div>
<div class="c hc hh" style="left:129px;top:133px;width:27px;height:61px;font-weight:bold;font-size:9px;line-height:9.8px;"><span>Auto<br>ST-<br>045</span></div>
<div class="c hc hh" style="left:157px;top:133px;width:27px;height:61px;font-weight:bold;font-size:9px;line-height:9.8px;"><span>Auto<br>004</span></div>
<div class="c hc hh" style="left:185px;top:133px;width:26px;height:61px;font-weight:bold;font-size:9px;line-height:9.8px;"><span>Auto<br>005</span></div>
<div class="c hc hh" style="left:212px;top:133px;width:27px;height:61px;font-weight:bold;font-size:9px;line-height:9.8px;"><span>Auto<br>006</span></div>
<div class="c hc hh" style="left:240px;top:133px;width:27px;height:61px;font-weight:bold;font-size:9px;line-height:9.8px;"><span>Auto<br>174</span></div>
<div class="c hc hh" style="left:268px;top:133px;width:27px;height:61px;font-weight:bold;font-size:9px;line-height:9.8px;"><span>Depa<br>rtam<br>ento/<br>Distri<br>to</span></div>
<div class="c hc hh" style="left:296px;top:133px;width:26px;height:61px;font-weight:bold;font-size:9px;line-height:9.8px;"><span>Muni<br>cipio<br>/Dist<br>rito</span></div>
<div class="c hc hh" style="left:323px;top:133px;width:67px;height:61px;font-weight:bold;font-size:9.6px;line-height:11px;"><span>Programa</span></div>
<div class="c hc hh" style="left:391px;top:133px;width:79px;height:61px;font-weight:bold;font-size:9.6px;line-height:11px;"><span>Nombre<br>indicador</span></div>
<div class="c hc hh" style="left:471px;top:133px;width:163px;height:61px;font-weight:bold;font-size:9.6px;line-height:11px;"><span>Descripción</span></div>
<div class="c hc hh" style="left:635px;top:133px;width:39px;height:61px;font-weight:bold;font-size:8.7px;line-height:10.5px;"><span>Unidad<br>de<br>medida</span></div>
<div class="c hc hh" style="left:971px;top:133px;width:78px;height:61px;font-weight:bold;font-size:8.7px;line-height:10.5px;"><span>Comentario</span></div>
<div class="c hc hh" style="left:1050px;top:133px;width:53px;height:61px;font-weight:bold;font-size:8.7px;line-height:10.5px;"><span>Resultados</span></div>
<div class="c hc" style="left:675px;top:133px;width:106px;height:25px;font-weight:bold;font-size:9.5px;color:#222;"><span>Programación</span></div>
<div class="c hc" style="left:782px;top:133px;width:107px;height:25px;font-weight:bold;font-size:9.5px;color:#222;"><span>Ejecución</span></div>
<div class="c hc" style="left:890px;top:133px;width:80px;height:25px;font-weight:bold;font-size:9.3px;color:#222;"><span>% de ejecución</span></div>
<div class="c hc" style="left:675px;top:159px;width:34px;height:35px;font-weight:bold;font-size:9px;line-height:9.6px;"><span>Total<br>año</span></div>
<div class="c hc" style="left:710px;top:159px;width:35px;height:35px;font-weight:bold;font-size:8.3px;line-height:9.6px;"><span>ene-jun</span></div>
<div class="c hc" style="left:746px;top:159px;width:35px;height:35px;font-weight:bold;font-size:8.3px;line-height:9.6px;"><span>jul-dic</span></div>
<div class="c hc" style="left:782px;top:159px;width:35px;height:35px;font-weight:bold;font-size:8.3px;line-height:9.6px;"><span>ene-jun</span></div>
<div class="c hc" style="left:818px;top:159px;width:35px;height:35px;font-weight:bold;font-size:8.3px;line-height:9.6px;"><span>jul-dic</span></div>
<div class="c hc" style="left:854px;top:159px;width:35px;height:35px;font-weight:bold;font-size:9px;line-height:9.6px;"><span>Total<br>año</span></div>
<div class="c hc" style="left:890px;top:159px;width:26px;height:35px;font-weight:bold;font-size:8.3px;line-height:9.6px;"><span>ene-<br>jun</span></div>
<div class="c hc" style="left:917px;top:159px;width:26px;height:35px;font-weight:bold;font-size:8.3px;line-height:9.6px;"><span>jul-<br>dic</span></div>
<div class="c hc" style="left:944px;top:159px;width:26px;height:35px;font-weight:bold;font-size:8.3px;line-height:9.6px;"><span>total</span></div>
<div class="fb" style="left:60px;top:199px"><i></i></div>
<div class="fb" style="left:88px;top:199px"><i></i></div>
<div class="fb" style="left:115px;top:199px"><i></i></div>
<div class="fb" style="left:143px;top:199px"><i></i></div>
<div class="fb" style="left:171px;top:199px"><i></i></div>
<div class="fb" style="left:198px;top:199px"><i></i></div>
<div class="fb" style="left:226px;top:199px"><i></i></div>
<div class="fb" style="left:254px;top:199px"><i></i></div>
<div class="fb" style="left:282px;top:199px"><i></i></div>
<div class="fb" style="left:309px;top:199px"><i></i></div>
<div class="fb" style="left:377px;top:199px"><i></i></div>
<div class="b" style="left:74px;top:195px;width:0;height:0;border-top:5px solid #1e7a1e;border-right:5px solid transparent;"></div>
<div class="b" style="left:157px;top:195px;width:0;height:0;border-top:5px solid #1e7a1e;border-right:5px solid transparent;"></div>
<div class="b" style="left:185px;top:195px;width:0;height:0;border-top:5px solid #1e7a1e;border-right:5px solid transparent;"></div>
<div class="b" style="left:212px;top:195px;width:0;height:0;border-top:5px solid #1e7a1e;border-right:5px solid transparent;"></div>
<div class="c l" style="left:48px;top:214px;width:108px;height:18px;font-weight:bold;font-size:8.6px;"><span>Cumplimiento global</span></div>
<div class="c l" style="left:48px;top:233px;width:219px;height:13px;font-weight:bold;font-size:8.85px;"><span>Acceso a los servicios y atención en salud</span></div>
<div class="c hc" style="left:1050px;top:214px;width:53px;height:18px;font-weight:bold;font-size:12px;color:#fff;"><span>22.3%</span></div>
<div class="c hc" style="left:1050px;top:233px;width:53px;height:13px;font-weight:bold;font-size:10.3px;color:#000;"><span>61.6%</span></div>
<div class="c hc" style="left:23px;top:247px;width:22px;height:50px;font-weight:bold;font-size:7.5px;-webkit-text-stroke:.25px #000;"><span>1</span></div>
<div class="c hc" style="left:74px;top:247px;width:27px;height:50px;font-size:7.7px;"><span>Si</span></div>
<div class="c hc" style="left:102px;top:247px;width:26px;height:50px;font-size:7.7px;"><span>Si</span></div>
<div class="c hc" style="left:129px;top:247px;width:27px;height:50px;font-size:7.7px;"><span>Si</span></div>
<div class="c hc" style="left:157px;top:247px;width:27px;height:50px;font-size:7.7px;"><span>Si</span></div>
<div class="c hc" style="left:185px;top:247px;width:26px;height:50px;font-size:7.7px;"><span>Si</span></div>
<div class="c hc" style="left:212px;top:247px;width:27px;height:50px;font-size:7.7px;"><span>Si</span></div>
<div class="c l" style="left:270px;top:247px;width:25px;height:50px;font-size:7.7px;"><span>Si</span></div>
<div class="c l" style="left:325px;top:247px;width:65px;height:50px;font-size:7.7px;line-height:9.7px;"><span>Promoción de la<br>afiliación y<br>atención integral<br>en salud</span></div>
<div class="c l" style="left:393px;top:247px;width:77px;height:50px;font-size:7.5px;line-height:9.7px;"><span>Actualización de la<br>base de datos de la<br>población desplazada<br>(PSD) del Registro<br>Único de Victimas</span></div>
<div class="c l" style="left:473px;top:247px;width:161px;height:50px;font-size:7.5px;line-height:9.7px;white-space:nowrap;"><span>No. de actualizaciones de la base de población<br>desplazada (PSD) del Registro Único de<br>Victimas (RUV)en el semestre.<br><i>Nota: Mínimo 3 en el semestre</i></span></div>
<div class="c hc" style="left:635px;top:247px;width:39px;height:50px;font-size:7.5px;line-height:9.7px;"><span>Actualizac<br>iones</span></div>
<div class="c rr" style="left:675px;top:247px;width:33px;height:50px;font-size:9px;"><span>2</span></div>
<div class="c rr" style="left:710px;top:247px;width:34px;height:50px;font-size:9px;"><span>2</span></div>
<div class="c rr" style="left:746px;top:247px;width:34px;height:50px;font-size:9px;"><span>0</span></div>
<div class="c rr" style="left:782px;top:247px;width:34px;height:50px;font-size:9px;"><span>1</span></div>
<div class="c rr" style="left:818px;top:247px;width:34px;height:50px;font-size:9px;"><span>1</span></div>
<div class="c rr" style="left:854px;top:247px;width:34px;height:50px;font-size:9px;"><span>2</span></div>
<div class="c rr" style="left:890px;top:247px;width:25px;height:50px;font-size:9px;"><span>50%</span></div>
<div class="c rr" style="left:917px;top:247px;width:25px;height:50px;font-size:9px;"><span>0%</span></div>
<div class="c rr" style="left:944px;top:247px;width:25px;height:50px;font-size:9px;"><span>100%</span></div>
<div class="c hc" style="left:1050px;top:247px;width:53px;height:50px;font-weight:bold;font-size:7.5px;-webkit-text-stroke:.3px #000;color:#000;"><span>100.0%</span></div>
<div class="c hc" style="left:23px;top:298px;width:22px;height:59px;font-weight:bold;font-size:7.5px;-webkit-text-stroke:.25px #000;"><span>2</span></div>
<div class="c hc" style="left:74px;top:298px;width:27px;height:59px;font-size:7.7px;"><span>Si</span></div>
<div class="c hc" style="left:102px;top:298px;width:26px;height:59px;font-size:7.7px;"><span>Si</span></div>
<div class="c hc" style="left:129px;top:298px;width:27px;height:59px;font-size:7.7px;"><span>Si</span></div>
<div class="c hc" style="left:157px;top:298px;width:27px;height:59px;font-size:7.7px;"><span>Si</span></div>
<div class="c hc" style="left:185px;top:298px;width:26px;height:59px;font-size:7.7px;"><span>Si</span></div>
<div class="c hc" style="left:212px;top:298px;width:27px;height:59px;font-size:7.7px;"><span>Si</span></div>
<div class="c l" style="left:270px;top:298px;width:25px;height:59px;font-size:7.7px;"><span>Si</span></div>
<div class="c l" style="left:298px;top:298px;width:24px;height:59px;font-size:7.7px;"><span>Si</span></div>
<div class="c l" style="left:325px;top:298px;width:65px;height:59px;font-size:7.7px;line-height:9.7px;"><span>Promoción de la<br>afiliación y<br>atención integral<br>en salud</span></div>
<div class="c l" style="left:393px;top:298px;width:77px;height:59px;font-size:7.5px;line-height:9.7px;"><span>Actualización de la<br>base de datos de PSD<br>del Registro Único de<br>Victimas,&nbsp; en las IPS</span></div>
<div class="c l" style="left:473px;top:298px;width:161px;height:59px;font-size:7.5px;line-height:9.7px;white-space:nowrap;"><span>No. de IPS , de la red de servicios que atiende a<br>PSD víctima del conflico armado, con 3<br>actualizaciones de la base de datos de PSD del<br>RUV a las&nbsp; IPS en el semestre.<br><i>Nota: mínimo 3 en el semestre.</i></span></div>
<div class="c hc" style="left:635px;top:298px;width:39px;height:59px;font-size:7.5px;line-height:9.7px;"><span>IPS</span></div>
<div class="c rr" style="left:675px;top:298px;width:33px;height:59px;font-size:9px;"><span>3</span></div>
<div class="c rr" style="left:710px;top:298px;width:34px;height:59px;font-size:9px;"><span>3</span></div>
<div class="c rr" style="left:746px;top:298px;width:34px;height:59px;font-size:9px;"><span>0</span></div>
<div class="c rr" style="left:782px;top:298px;width:34px;height:59px;font-size:9px;"><span>2</span></div>
<div class="c rr" style="left:818px;top:298px;width:34px;height:59px;font-size:9px;"><span>1</span></div>
<div class="c rr" style="left:854px;top:298px;width:34px;height:59px;font-size:9px;"><span>3</span></div>
<div class="c rr" style="left:890px;top:298px;width:25px;height:59px;font-size:9px;"><span>67%</span></div>
<div class="c rr" style="left:917px;top:298px;width:25px;height:59px;font-size:9px;"><span>0%</span></div>
<div class="c rr" style="left:944px;top:298px;width:25px;height:59px;font-size:9px;"><span>100%</span></div>
<div class="c hc" style="left:1050px;top:298px;width:53px;height:59px;font-weight:bold;font-size:7.5px;-webkit-text-stroke:.3px #000;color:#000;"><span>100.0%</span></div>
<div class="c hc" style="left:23px;top:358px;width:22px;height:43px;font-weight:bold;font-size:7.5px;-webkit-text-stroke:.25px #000;"><span>3</span></div>
<div class="c hc" style="left:74px;top:358px;width:27px;height:43px;font-size:7.7px;"><span>Si</span></div>
<div class="c hc" style="left:102px;top:358px;width:26px;height:43px;font-size:7.7px;"><span>Si</span></div>
<div class="c hc" style="left:157px;top:358px;width:27px;height:43px;font-size:7.7px;"><span>Si</span></div>
<div class="c hc" style="left:185px;top:358px;width:26px;height:43px;font-size:7.7px;"><span>Si</span></div>
<div class="c hc" style="left:212px;top:358px;width:27px;height:43px;font-size:7.7px;"><span>Si</span></div>
<div class="c l" style="left:298px;top:358px;width:24px;height:43px;font-size:7.7px;"><span>Si</span></div>
<div class="c l" style="left:325px;top:358px;width:65px;height:43px;font-size:7.7px;line-height:9.7px;"><span>Promoción de la<br>afiliación y<br>atención integral<br>en salud</span></div>
<div class="c l" style="left:393px;top:358px;width:77px;height:43px;font-size:7.5px;line-height:9.7px;"><span>Identificación y<br>afiliación de la<br>población desplazada</span></div>
<div class="c l" style="left:473px;top:358px;width:161px;height:43px;font-size:7.5px;line-height:9.7px;white-space:nowrap;"><span>No. de acciones de promoción para la afiliación<br>programadas y realizadas.</span></div>
<div class="c hc" style="left:635px;top:358px;width:39px;height:43px;font-size:7.5px;line-height:9.7px;"><span>Acciones</span></div>
<div class="c rr" style="left:675px;top:358px;width:33px;height:43px;font-size:9px;"><span>5</span></div>
<div class="c rr" style="left:710px;top:358px;width:34px;height:43px;font-size:9px;"><span>2</span></div>
<div class="c rr" style="left:746px;top:358px;width:34px;height:43px;font-size:9px;"><span>3</span></div>
<div class="c rr" style="left:782px;top:358px;width:34px;height:43px;font-size:9px;"><span>2</span></div>
<div class="c rr" style="left:818px;top:358px;width:34px;height:43px;font-size:9px;"><span>3</span></div>
<div class="c rr" style="left:854px;top:358px;width:34px;height:43px;font-size:9px;"><span>5</span></div>
<div class="c rr" style="left:890px;top:358px;width:25px;height:43px;font-size:9px;"><span>100%</span></div>
<div class="c rr" style="left:917px;top:358px;width:25px;height:43px;font-size:9px;"><span>100%</span></div>
<div class="c rr" style="left:944px;top:358px;width:25px;height:43px;font-size:9px;"><span>100%</span></div>
<div class="c hc" style="left:1050px;top:358px;width:53px;height:43px;font-weight:bold;font-size:7.5px;-webkit-text-stroke:.3px #000;color:#000;"><span>100.0%</span></div>
<div class="c hc" style="left:23px;top:402px;width:22px;height:59px;font-weight:bold;font-size:7.5px;-webkit-text-stroke:.25px #000;"><span>4</span></div>
<div class="c hc" style="left:74px;top:402px;width:27px;height:59px;font-size:7.7px;"><span>Si</span></div>
<div class="c l" style="left:270px;top:402px;width:25px;height:59px;font-size:7.7px;"><span>Si</span></div>
<div class="c l" style="left:298px;top:402px;width:24px;height:59px;font-size:7.7px;"><span>Si</span></div>
<div class="c l" style="left:325px;top:402px;width:65px;height:59px;font-size:7.7px;line-height:9.7px;"><span>Promoción de la<br>afiliación y<br>atención integral<br>en salud</span></div>
<div class="c l" style="left:393px;top:402px;width:77px;height:59px;font-size:7.5px;line-height:9.7px;"><span>&nbsp;Eliminación de la<br>multiafiliación</span></div>
<div class="c l" style="left:473px;top:402px;width:161px;height:59px;font-size:7.5px;line-height:9.7px;white-space:nowrap;"><span>No. de casos de multiafiliación reportados y<br>solucionados&nbsp; por EPS que operan en el<br>municipio.<br><i>Nota: los reportados se clasifican como<br>programación al final del semestre y los<br>&nbsp;solucionados, como&nbsp; ejecución.</i></span></div>
<div class="c hc" style="left:635px;top:402px;width:39px;height:59px;font-size:7.5px;line-height:9.7px;"><span>Casos</span></div>
<div class="c rr" style="left:675px;top:402px;width:33px;height:59px;font-size:9px;"><span>7</span></div>
<div class="c rr" style="left:710px;top:402px;width:34px;height:59px;font-size:9px;"><span>5</span></div>
<div class="c rr" style="left:746px;top:402px;width:34px;height:59px;font-size:9px;"><span>2</span></div>
<div class="c rr" style="left:782px;top:402px;width:34px;height:59px;font-size:9px;"><span>4</span></div>
<div class="c rr" style="left:818px;top:402px;width:34px;height:59px;font-size:9px;"><span>1</span></div>
<div class="c rr" style="left:854px;top:402px;width:34px;height:59px;font-size:9px;"><span>5</span></div>
<div class="c rr" style="left:890px;top:402px;width:25px;height:59px;font-size:9px;"><span>80%</span></div>
<div class="c rr" style="left:917px;top:402px;width:25px;height:59px;font-size:9px;"><span>50%</span></div>
<div class="c rr" style="left:944px;top:402px;width:25px;height:59px;font-size:9px;"><span>71%</span></div>
<div class="c hc" style="left:1050px;top:402px;width:53px;height:59px;font-weight:bold;font-size:7.5px;-webkit-text-stroke:.3px #000;color:#000;"><span>71.4%</span></div>
<div class="c hc" style="left:23px;top:462px;width:22px;height:34px;font-weight:bold;font-size:7.5px;-webkit-text-stroke:.25px #000;"><span>5</span></div>
<div class="c hc" style="left:74px;top:462px;width:27px;height:34px;font-size:7.7px;"><span>Si</span></div>
<div class="c hc" style="left:102px;top:462px;width:26px;height:34px;font-size:7.7px;"><span>Si</span></div>
<div class="c hc" style="left:129px;top:462px;width:27px;height:34px;font-size:7.7px;"><span>Si</span></div>
<div class="c hc" style="left:157px;top:462px;width:27px;height:34px;font-size:7.7px;"><span>Si</span></div>
<div class="c hc" style="left:185px;top:462px;width:26px;height:34px;font-size:7.7px;"><span>Si</span></div>
<div class="c hc" style="left:212px;top:462px;width:27px;height:34px;font-size:7.7px;"><span>Si</span></div>
<div class="c l" style="left:298px;top:462px;width:24px;height:34px;font-size:7.7px;"><span>Si</span></div>
<div class="c l" style="left:325px;top:462px;width:65px;height:34px;font-size:7.7px;line-height:9.7px;align-items:flex-start;"><span>Promoción de la<br>afiliación y<br>atención integral<br>en salud</span></div>
<div class="c l" style="left:393px;top:462px;width:77px;height:34px;font-size:7.5px;line-height:9.7px;"><span>Atención extramural</span></div>
<div class="c l" style="left:473px;top:462px;width:161px;height:34px;font-size:7.5px;line-height:9.7px;white-space:nowrap;"><span>No. de Jornadas de salud programadas y<br>efectuadas.</span></div>
<div class="c hc" style="left:635px;top:462px;width:39px;height:34px;font-size:7.5px;line-height:9.7px;"><span>Jornadas<br>de<br>afiliación</span></div>
<div class="c rr" style="left:675px;top:462px;width:33px;height:34px;font-size:9px;"><span>6</span></div>
<div class="c rr" style="left:710px;top:462px;width:34px;height:34px;font-size:9px;"><span>3</span></div>
<div class="c rr" style="left:746px;top:462px;width:34px;height:34px;font-size:9px;"><span>3</span></div>
<div class="c rr" style="left:782px;top:462px;width:34px;height:34px;font-size:9px;"><span>0</span></div>
<div class="c rr" style="left:818px;top:462px;width:34px;height:34px;font-size:9px;"><span>0</span></div>
<div class="c rr" style="left:854px;top:462px;width:34px;height:34px;font-size:9px;"><span>0</span></div>
<div class="c rr" style="left:890px;top:462px;width:25px;height:34px;font-size:9px;"><span>0%</span></div>
<div class="c rr" style="left:917px;top:462px;width:25px;height:34px;font-size:9px;"><span>0%</span></div>
<div class="c rr" style="left:944px;top:462px;width:25px;height:34px;font-size:9px;"><span>0%</span></div>
<div class="c hc" style="left:1050px;top:462px;width:53px;height:34px;font-weight:bold;font-size:7.5px;-webkit-text-stroke:.3px #fff;color:#fff;"><span>0.0%</span></div>
<div class="c hc" style="left:23px;top:497px;width:22px;height:44px;font-weight:bold;font-size:7.5px;-webkit-text-stroke:.25px #000;"><span>6</span></div>
<div class="c hc" style="left:74px;top:497px;width:27px;height:44px;font-size:7.7px;"><span>Si</span></div>
<div class="c hc" style="left:129px;top:497px;width:27px;height:44px;font-size:7.7px;"><span>Si</span></div>
<div class="c l" style="left:270px;top:497px;width:25px;height:44px;font-size:7.7px;"><span>Si</span></div>
<div class="c l" style="left:325px;top:497px;width:65px;height:44px;font-size:7.7px;line-height:9.7px;"><span>Promoción de la<br>afiliación y<br>atención integral<br>en salud</span></div>
<div class="c l" style="left:393px;top:497px;width:77px;height:44px;font-size:7.5px;line-height:9.7px;"><span>Operación del sistema<br>de referencia</span></div>
<div class="c l" style="left:473px;top:497px;width:161px;height:44px;font-size:7.5px;line-height:9.7px;white-space:nowrap;"><span>No. de personas en SD&nbsp; referidas en el<br>semestre&nbsp; (ejecución).<br><i>Nota: indicador por demanda. Las columnas<br>de programación no se diligencian.</i></span></div>
<div class="c hc" style="left:635px;top:497px;width:39px;height:44px;font-size:7.5px;line-height:9.7px;"><span>Personas</span></div>
<div class="c rr" style="left:675px;top:497px;width:33px;height:44px;font-size:9px;"><span>5</span></div>
<div class="c rr" style="left:710px;top:497px;width:34px;height:44px;font-size:9px;"><span>1</span></div>
<div class="c rr" style="left:746px;top:497px;width:34px;height:44px;font-size:9px;"><span>4</span></div>
<div class="c rr" style="left:782px;top:497px;width:34px;height:44px;font-size:9px;"><span>1</span></div>
<div class="c rr" style="left:818px;top:497px;width:34px;height:44px;font-size:9px;"><span>1</span></div>
<div class="c rr" style="left:854px;top:497px;width:34px;height:44px;font-size:9px;"><span>2</span></div>
<div class="c rr" style="left:890px;top:497px;width:25px;height:44px;font-size:9px;"><span>100%</span></div>
<div class="c rr" style="left:917px;top:497px;width:25px;height:44px;font-size:9px;"><span>25%</span></div>
<div class="c rr" style="left:944px;top:497px;width:25px;height:44px;font-size:9px;"><span>40%</span></div>
<div class="c hc" style="left:1050px;top:497px;width:53px;height:44px;font-weight:bold;font-size:7.5px;-webkit-text-stroke:.3px #fff;color:#fff;"><span>40.0%</span></div>
<div class="c hc" style="left:23px;top:542px;width:22px;height:66px;font-weight:bold;font-size:7.5px;-webkit-text-stroke:.25px #000;"><span>7</span></div>
<div class="c hc" style="left:74px;top:542px;width:27px;height:66px;font-size:7.7px;"><span>Si</span></div>
<div class="c hc" style="left:129px;top:542px;width:27px;height:66px;font-size:7.7px;"><span>Si</span></div>
<div class="c l" style="left:270px;top:542px;width:25px;height:66px;font-size:7.7px;"><span>Si</span></div>
<div class="c l" style="left:298px;top:542px;width:24px;height:66px;font-size:7.7px;"><span>Si</span></div>
<div class="c l" style="left:325px;top:542px;width:65px;height:66px;font-size:7.7px;line-height:9.7px;"><span>Promoción de la<br>afiliación y<br>atención integral<br>en salud</span></div>
<div class="c l" style="left:393px;top:542px;width:77px;height:66px;font-size:7.5px;line-height:9.7px;white-space:nowrap;"><span>Solución quejas y reclamos</span></div>
<div class="c l" style="left:473px;top:542px;width:161px;height:66px;font-size:7.5px;line-height:9.7px;white-space:nowrap;"><span>No. de Quejas, reclamos, derechos de petición,<br>tutelas&nbsp; presentadas por la población<br>desplazada y resueltas.<br>Nota: <i>las presentadas seclasifican como<br>programación al final del semestre y las<br>resueltas, como ejecución.</i></span></div>
<div class="c hc" style="left:635px;top:542px;width:39px;height:66px;font-size:7.5px;line-height:9.7px;"><span>Quejas,<br>reclamos,<br>tutelas</span></div>
<div class="c rr" style="left:675px;top:542px;width:33px;height:66px;font-size:9px;"><span>1</span></div>
<div class="c rr" style="left:710px;top:542px;width:34px;height:66px;font-size:9px;"><span>0</span></div>
<div class="c rr" style="left:746px;top:542px;width:34px;height:66px;font-size:9px;"><span>1</span></div>
<div class="c rr" style="left:782px;top:542px;width:34px;height:66px;font-size:9px;"><span>1</span></div>
<div class="c rr" style="left:818px;top:542px;width:34px;height:66px;font-size:9px;"><span>1</span></div>
<div class="c rr" style="left:854px;top:542px;width:34px;height:66px;font-size:9px;"><span>2</span></div>
<div class="c rr" style="left:890px;top:542px;width:25px;height:66px;font-size:9px;"><span>0%</span></div>
<div class="c rr" style="left:917px;top:542px;width:25px;height:66px;font-size:9px;"><span>100%</span></div>
<div class="c rr" style="left:944px;top:542px;width:25px;height:66px;font-size:9px;"><span>200%</span></div>
<div class="c hc" style="left:1050px;top:542px;width:53px;height:66px;font-weight:bold;font-size:7.5px;-webkit-text-stroke:.3px #000;color:#000;"><span>100.0%</span></div>
<div class="c hc" style="left:23px;top:609px;width:22px;height:63px;font-weight:bold;font-size:7.5px;-webkit-text-stroke:.25px #000;"><span>8</span></div>
<div class="c hc" style="left:74px;top:609px;width:27px;height:63px;font-size:7.7px;"><span>Si</span></div>
<div class="c l" style="left:270px;top:609px;width:25px;height:63px;font-size:7.7px;"><span>Si</span></div>
<div class="c l" style="left:325px;top:609px;width:65px;height:63px;font-size:7.7px;line-height:9.7px;"><span>Promoción de la<br>afiliación y<br>atención integral<br>en salud</span></div>
<div class="c l" style="left:393px;top:609px;width:77px;height:63px;font-size:7.5px;line-height:9.7px;white-space:nowrap;"><span>Servicios No POS autorizados</span></div>
<div class="c l" style="left:473px;top:609px;width:161px;height:63px;font-size:7.5px;line-height:9.7px;white-space:nowrap;"><span>No. de Solicitudes de servicios No POS<br>presentadas y autorizadas en el semestre .<br><i>Nota: se clasifican&nbsp; las presentadas como<br>programación al final del semestre y las<br>autorizadas, como&nbsp; ejecución.</i></span></div>
<div class="c hc" style="left:635px;top:609px;width:39px;height:63px;font-size:7.5px;line-height:9.7px;"><span>Solicitude<br>s</span></div>
<div class="c rr" style="left:675px;top:609px;width:33px;height:63px;font-size:9px;"><span>5</span></div>
<div class="c rr" style="left:710px;top:609px;width:34px;height:63px;font-size:9px;"><span>1</span></div>
<div class="c rr" style="left:746px;top:609px;width:34px;height:63px;font-size:9px;"><span>4</span></div>
<div class="c rr" style="left:782px;top:609px;width:34px;height:63px;font-size:9px;"><span>0</span></div>
<div class="c rr" style="left:818px;top:609px;width:34px;height:63px;font-size:9px;"><span>1</span></div>
<div class="c rr" style="left:854px;top:609px;width:34px;height:63px;font-size:9px;"><span>1</span></div>
<div class="c rr" style="left:890px;top:609px;width:25px;height:63px;font-size:9px;"><span>0%</span></div>
<div class="c rr" style="left:917px;top:609px;width:25px;height:63px;font-size:9px;"><span>25%</span></div>
<div class="c rr" style="left:944px;top:609px;width:25px;height:63px;font-size:9px;"><span>20%</span></div>
<div class="c hc" style="left:1050px;top:609px;width:53px;height:63px;font-weight:bold;font-size:7.5px;-webkit-text-stroke:.3px #fff;color:#fff;"><span>20.0%</span></div>
<div class="c l" style="left:473px;top:673px;width:161px;height:15px;font-size:7.5px;line-height:9.7px;white-space:nowrap;"><span style="position:relative;top:2px">Monto total de recursos para la atención a la</span></div>
<div class="b" style="left:469px;top:245px;width:163px;height:50px;border:2px solid #3c3c3c;box-shadow:inset 0 0 0 1px #8c8c8c;"></div>
<div class="b" style="left:632px;top:295px;width:3px;height:3px;background:#222;border:1px solid #fff"></div>
<div class="b" style="left:0px;top:122px;width:1124px;height:11px;background:linear-gradient(#f4f8fd,#d6e0ee);"></div>
<div class="b" style="left:0px;top:122px;width:22px;height:11px;background:#a9c4e9;border-right:1px solid #9eb6ce;"></div>
<div class="c hc colh" style="left:23px;top:122px;width:22px;height:11px;font-size:9.5px;color:#222;"><span>A</span></div>
<div class="b" style="left:45px;top:122px;width:1px;height:11px;background:#9eb6ce"></div>
<div class="c hc colh" style="left:46px;top:122px;width:27px;height:11px;font-size:9.5px;color:#222;"><span>B</span></div>
<div class="b" style="left:73px;top:122px;width:1px;height:11px;background:#9eb6ce"></div>
<div class="c hc colh" style="left:74px;top:122px;width:27px;height:11px;font-size:9.5px;color:#222;"><span>C</span></div>
<div class="b" style="left:101px;top:122px;width:1px;height:11px;background:#9eb6ce"></div>
<div class="c hc colh" style="left:102px;top:122px;width:26px;height:11px;font-size:9.5px;color:#222;"><span>D</span></div>
<div class="b" style="left:128px;top:122px;width:1px;height:11px;background:#9eb6ce"></div>
<div class="c hc colh" style="left:129px;top:122px;width:27px;height:11px;font-size:9.5px;color:#222;"><span>E</span></div>
<div class="b" style="left:156px;top:122px;width:1px;height:11px;background:#9eb6ce"></div>
<div class="c hc colh" style="left:157px;top:122px;width:27px;height:11px;font-size:9.5px;color:#222;"><span>F</span></div>
<div class="b" style="left:184px;top:122px;width:1px;height:11px;background:#9eb6ce"></div>
<div class="c hc colh" style="left:185px;top:122px;width:26px;height:11px;font-size:9.5px;color:#222;"><span>G</span></div>
<div class="b" style="left:211px;top:122px;width:1px;height:11px;background:#9eb6ce"></div>
<div class="c hc colh" style="left:212px;top:122px;width:27px;height:11px;font-size:9.5px;color:#222;"><span>H</span></div>
<div class="b" style="left:239px;top:122px;width:1px;height:11px;background:#9eb6ce"></div>
<div class="c hc colh" style="left:240px;top:122px;width:27px;height:11px;font-size:9.5px;color:#222;"><span>I</span></div>
<div class="b" style="left:267px;top:122px;width:1px;height:11px;background:#9eb6ce"></div>
<div class="c hc colh" style="left:268px;top:122px;width:27px;height:11px;font-size:9.5px;color:#222;"><span>J</span></div>
<div class="b" style="left:295px;top:122px;width:1px;height:11px;background:#9eb6ce"></div>
<div class="c hc colh" style="left:296px;top:122px;width:26px;height:11px;font-size:9.5px;color:#222;"><span>K</span></div>
<div class="b" style="left:322px;top:122px;width:1px;height:11px;background:#9eb6ce"></div>
<div class="c hc colh" style="left:323px;top:122px;width:67px;height:11px;font-size:9.5px;color:#222;"><span>L</span></div>
<div class="b" style="left:390px;top:122px;width:1px;height:11px;background:#9eb6ce"></div>
<div class="c hc colh" style="left:391px;top:122px;width:79px;height:11px;font-size:9.5px;color:#222;"><span>M</span></div>
<div class="b" style="left:470px;top:122px;width:1px;height:11px;background:#9eb6ce"></div>
<div class="c hc colh" style="left:471px;top:122px;width:163px;height:11px;background:linear-gradient(#f9d99f,#f1c15f);font-size:9.5px;color:#222;"><span>N</span></div>
<div class="b" style="left:634px;top:122px;width:1px;height:11px;background:#9eb6ce"></div>
<div class="c hc colh" style="left:635px;top:122px;width:39px;height:11px;font-size:9.5px;color:#222;"><span>O</span></div>
<div class="b" style="left:674px;top:122px;width:1px;height:11px;background:#9eb6ce"></div>
<div class="c hc colh" style="left:675px;top:122px;width:34px;height:11px;font-size:9.5px;color:#222;"><span>P</span></div>
<div class="b" style="left:709px;top:122px;width:1px;height:11px;background:#9eb6ce"></div>
<div class="c hc colh" style="left:710px;top:122px;width:35px;height:11px;font-size:9.5px;color:#222;"><span>Q</span></div>
<div class="b" style="left:745px;top:122px;width:1px;height:11px;background:#9eb6ce"></div>
<div class="c hc colh" style="left:746px;top:122px;width:35px;height:11px;font-size:9.5px;color:#222;"><span>R</span></div>
<div class="b" style="left:781px;top:122px;width:1px;height:11px;background:#9eb6ce"></div>
<div class="c hc colh" style="left:782px;top:122px;width:35px;height:11px;font-size:9.5px;color:#222;"><span>S</span></div>
<div class="b" style="left:817px;top:122px;width:1px;height:11px;background:#9eb6ce"></div>
<div class="c hc colh" style="left:818px;top:122px;width:35px;height:11px;font-size:9.5px;color:#222;"><span>T</span></div>
<div class="b" style="left:853px;top:122px;width:1px;height:11px;background:#9eb6ce"></div>
<div class="c hc colh" style="left:854px;top:122px;width:35px;height:11px;font-size:9.5px;color:#222;"><span>U</span></div>
<div class="b" style="left:889px;top:122px;width:1px;height:11px;background:#9eb6ce"></div>
<div class="c hc colh" style="left:890px;top:122px;width:26px;height:11px;font-size:9.5px;color:#222;"><span>V</span></div>
<div class="b" style="left:916px;top:122px;width:1px;height:11px;background:#9eb6ce"></div>
<div class="c hc colh" style="left:917px;top:122px;width:26px;height:11px;font-size:9.5px;color:#222;"><span>W</span></div>
<div class="b" style="left:943px;top:122px;width:1px;height:11px;background:#9eb6ce"></div>
<div class="c hc colh" style="left:944px;top:122px;width:26px;height:11px;font-size:9.5px;color:#222;"><span>X</span></div>
<div class="b" style="left:970px;top:122px;width:1px;height:11px;background:#9eb6ce"></div>
<div class="c hc colh" style="left:971px;top:122px;width:78px;height:11px;font-size:9.5px;color:#222;"><span>Y</span></div>
<div class="b" style="left:1049px;top:122px;width:1px;height:11px;background:#9eb6ce"></div>
<div class="c hc colh" style="left:1050px;top:122px;width:53px;height:11px;font-size:9.5px;color:#222;"><span>Z</span></div>
<div class="b" style="left:1103px;top:122px;width:1px;height:11px;background:#9eb6ce"></div>
<div class="b" style="left:0px;top:132px;width:1110px;height:1px;background:#9eb6ce"></div>
<div class="b" style="left:0px;top:133px;width:22px;height:555px;background:#e4ecf7;"></div>
<div class="b" style="left:22px;top:132px;width:1px;height:556px;background:#9eb6ce"></div>
<div class="c rowh" style="left:0px;top:133px;width:22px;height:27px;font-size:9px;color:#333;"><span>1</span></div>
<div class="b" style="left:0px;top:159px;width:22px;height:1px;background:#9eb6ce"></div>
<div class="c rowh" style="left:0px;top:159px;width:22px;height:32px;font-size:9px;color:#333;"><span>2</span></div>
<div class="b" style="left:0px;top:190px;width:22px;height:1px;background:#9eb6ce"></div>
<div class="c rowh" style="left:0px;top:194px;width:22px;height:20px;font-size:9px;color:#333;"><span>4</span></div>
<div class="b" style="left:0px;top:213px;width:22px;height:1px;background:#9eb6ce"></div>
<div class="c rowh" style="left:0px;top:213px;width:22px;height:20px;font-size:9px;color:#333;"><span>5</span></div>
<div class="b" style="left:0px;top:232px;width:22px;height:1px;background:#9eb6ce"></div>
<div class="c rowh" style="left:0px;top:232px;width:22px;height:15px;font-size:9px;color:#333;"><span>6</span></div>
<div class="b" style="left:0px;top:246px;width:22px;height:1px;background:#9eb6ce"></div>
<div class="b" style="left:0px;top:247px;width:22px;height:50px;background:linear-gradient(90deg,#f9d99f,#f6cb7c);"></div>
<div class="c rowh" style="left:0px;top:246px;width:22px;height:52px;font-size:9px;color:#333;"><span>7</span></div>
<div class="b" style="left:0px;top:297px;width:22px;height:1px;background:#9eb6ce"></div>
<div class="c rowh" style="left:0px;top:297px;width:22px;height:61px;font-size:9px;color:#333;"><span>8</span></div>
<div class="b" style="left:0px;top:357px;width:22px;height:1px;background:#9eb6ce"></div>
<div class="c rowh" style="left:0px;top:357px;width:22px;height:45px;font-size:9px;color:#333;"><span>9</span></div>
<div class="b" style="left:0px;top:401px;width:22px;height:1px;background:#9eb6ce"></div>
<div class="c rowh" style="left:0px;top:401px;width:22px;height:61px;font-size:9px;color:#333;"><span>10</span></div>
<div class="b" style="left:0px;top:461px;width:22px;height:1px;background:#9eb6ce"></div>
<div class="c rowh" style="left:0px;top:461px;width:22px;height:36px;font-size:9px;color:#333;"><span>11</span></div>
<div class="b" style="left:0px;top:496px;width:22px;height:1px;background:#9eb6ce"></div>
<div class="c rowh" style="left:0px;top:496px;width:22px;height:46px;font-size:9px;color:#333;"><span>12</span></div>
<div class="b" style="left:0px;top:541px;width:22px;height:1px;background:#9eb6ce"></div>
<div class="c rowh" style="left:0px;top:541px;width:22px;height:68px;font-size:9px;color:#333;"><span>13</span></div>
<div class="b" style="left:0px;top:608px;width:22px;height:1px;background:#9eb6ce"></div>
<div class="c rowh" style="left:0px;top:608px;width:22px;height:65px;font-size:9px;color:#333;"><span>14</span></div>
<div class="b" style="left:0px;top:672px;width:22px;height:1px;background:#9eb6ce"></div>
<div class="b" style="left:0px;top:194px;width:22px;height:1px;background:#9eb6ce"></div>
<div class="b" style="left:0;top:191px;width:22px;height:3px;overflow:hidden;text-align:center;font-size:9px;line-height:9px;color:#333"><span style="position:relative;top:-2px">3</span></div>
<div class="b" style="left:1110px;top:121px;width:14px;height:567px;background:linear-gradient(90deg,#6f92cb,#8eabd8 50%,#a6bde1);"></div>
<div class="b" style="left:1110px;top:121px;width:14px;height:15px;background:#9db8e2;"></div>
<div class="b" style="left:1113px;top:125px;border-left:3.5px solid transparent;border-right:3.5px solid transparent;border-bottom:4px solid #4a6aa0;width:0;height:0"></div>
<div class="b" style="left:1111px;top:137px;width:11px;height:67px;background:linear-gradient(90deg,#f2f6fc,#d9e5f5);border:1px solid #8ea6cc;border-radius:2px;box-sizing:border-box;"></div>
<div class="b" style="left:1114px;top:165px;width:6px;height:1px;background:#8ea6cc;"></div>
<div class="b" style="left:1114px;top:167px;width:6px;height:1px;background:#8ea6cc;"></div>
<div class="b" style="left:1114px;top:169px;width:6px;height:1px;background:#8ea6cc;"></div>
<div class="b" style="left:1114px;top:171px;width:6px;height:1px;background:#8ea6cc;"></div>
<div class="b" style="left:1110px;top:674px;width:14px;height:14px;background:#b1c9ee;"></div>
<div class="b" style="left:1113px;top:678px;border-left:3.5px solid transparent;border-right:3.5px solid transparent;border-top:4px solid #4a6aa0;width:0;height:0"></div>
<div class="b" style="left:0px;top:688px;width:1124px;height:13px;background:#c4d8f4;"></div>
<div class="b" style="left:240px;top:688px;width:430px;height:13px;background:linear-gradient(#8dacdb,#a3bde4);"></div>
<div class="b" style="left:5px;top:691px;width:1px;height:6px;background:#2a4f9a;"></div>
<div class="b" style="left:7px;top:691px;border-top:3px solid transparent;border-bottom:3px solid transparent;border-right:4px solid #2a4f9a;width:0;height:0"></div>
<div class="b" style="left:18px;top:691px;border-top:3px solid transparent;border-bottom:3px solid transparent;border-right:4px solid #2a4f9a;width:0;height:0"></div>
<div class="b" style="left:29px;top:691px;border-top:3px solid transparent;border-bottom:3px solid transparent;border-left:4px solid #2a4f9a;width:0;height:0"></div>
<div class="b" style="left:40px;top:691px;border-top:3px solid transparent;border-bottom:3px solid transparent;border-left:4px solid #2a4f9a;width:0;height:0"></div>
<div class="b" style="left:45px;top:691px;width:1px;height:6px;background:#2a4f9a;"></div>
<svg class="b" style="left:50px;top:688px" width="215" height="13"><path d="M173 0H205L194 13H164Z" fill="#d3e2f6" stroke="#7f9ac2" stroke-width="1"/><path d="M121 0H173L164 13H112Z" fill="#d3e2f6" stroke="#7f9ac2" stroke-width="1"/><path d="M62 0H121L112 13H51Z" fill="#d3e2f6" stroke="#7f9ac2" stroke-width="1"/><path d="M0 0H62L51 13H5Z" fill="#fff" stroke="#7f9ac2" stroke-width="1"/></svg>
<div class="t rt" style="left:60px;top:687px;font-size:12px;font-weight:bold;color:#15428b;">Proceso</div>
<div class="t rt" style="left:115px;top:688px;font-size:11.5px;color:#15428b;">Resultado</div>
<div class="t rt" style="left:178px;top:688px;font-size:11.5px;color:#15428b;">Gráficos</div>
<div class="b" style="left:233px;top:691px;width:8px;height:7px;background:#fff;border:1px solid #8e9fb8;box-sizing:border-box;"></div>
<div class="b" style="left:231px;top:689px;width:5px;height:5px;background:#f0b030;border-radius:50%"></div>
<div class="b" style="left:668px;top:688px;width:456px;height:13px;background:linear-gradient(#93b0dc,#86a5d5);"></div>
<div class="b" style="left:669px;top:690px;width:3px;height:9px;background:#f0f5fc;border:1px solid #8ea6cc;box-sizing:border-box"></div>
<div class="b" style="left:677px;top:691px;border-top:3px solid transparent;border-bottom:3px solid transparent;border-right:4px solid #3a5a9a;width:0;height:0"></div>
<div class="b" style="left:688px;top:689px;width:376px;height:11px;background:linear-gradient(#f2f6fc,#d3e1f3);border:1px solid #8ea6cc;border-radius:2px;box-sizing:border-box;"></div>
<div class="b" style="left:874px;top:692px;width:1px;height:5px;background:#8ea6cc;"></div>
<div class="b" style="left:876px;top:692px;width:1px;height:5px;background:#8ea6cc;"></div>
<div class="b" style="left:878px;top:692px;width:1px;height:5px;background:#8ea6cc;"></div>
<div class="b" style="left:880px;top:692px;width:1px;height:5px;background:#8ea6cc;"></div>
<div class="b" style="left:1101px;top:691px;border-top:3px solid transparent;border-bottom:3px solid transparent;border-left:4px solid #3a5a9a;width:0;height:0"></div>
<div class="b" style="left:0px;top:701px;width:1124px;height:17px;background:linear-gradient(#d5e4f8,#c3d7f1 50%,#b7cdec);border-top:1px solid #9fb9df;box-sizing:border-box;"></div>
<div class="b" style="left:928px;top:702px;width:196px;height:16px;background:linear-gradient(#b6cdee,#9dbae5 50%,#8eaedd);"></div>
<div class="t rt" style="left:6px;top:703px;font-size:11.5px;color:#15428b;">Listo</div>
<div class="b" style="left:54px;top:703px;width:1px;height:13px;background:#a9c0e0;"></div>
<div class="t rt" style="left:63px;top:703px;font-size:11.5px;color:#15428b;">Bloq Mayús</div>
<div class="b" style="left:124px;top:704px;width:11px;height:10px;background:#fff;border:1px solid #8593ab;box-sizing:border-box;"></div>
<div class="b" style="left:125px;top:705px;width:4px;height:3px;background:#e05030;"></div>
<div class="b" style="left:930px;top:702px;width:48px;height:15px;background:rgba(255,255,255,.3);"></div>
<div class="b" style="left:932px;top:702px;width:15px;height:14px;background:linear-gradient(#fde3a5,#fbc455);border:1px solid #c99a3c;box-sizing:border-box;"></div>
<div class="b" style="left:935px;top:705px;width:9px;height:8px;border:1px solid #556;box-sizing:border-box;background:linear-gradient(90deg,transparent 3px,#556 3px,#556 4px,transparent 4px),linear-gradient(transparent 3px,#556 3px,#556 4px,transparent 4px),#fff"></div>
<div class="b" style="left:949px;top:705px;width:9px;height:8px;border:1px solid #556;box-sizing:border-box;background:#fff"></div>
<div class="b" style="left:951px;top:707px;width:5px;height:4px;border:1px solid #889;box-sizing:border-box;"></div>
<div class="b" style="left:963px;top:705px;width:9px;height:8px;border:1px solid #556;box-sizing:border-box;background:#fff"></div>
<div class="b" style="left:966px;top:705px;width:1px;height:5px;background:#556"></div>
<div class="b" style="left:966px;top:709px;width:5px;height:1px;background:#556"></div>
<div class="t rt" style="left:985px;top:703px;font-size:10.5px;color:#15428b;">70%</div>
<div class="b" style="left:1011px;top:704px;width:10px;height:10px;border-radius:50%;border:1px solid #5a6f95;background:linear-gradient(#f8fbff,#c9d9ee);box-sizing:border-box"></div>
<div class="b" style="left:1014px;top:708px;width:5px;height:1.5px;background:#3a4a6a;"></div>
<div class="b" style="left:1024px;top:709px;width:80px;height:1px;background:#7f93b5;"></div>
<div class="b" style="left:1066px;top:706px;width:1px;height:7px;background:#7f93b5;"></div>
<svg class="b" style="left:1047px;top:703px" width="9" height="12"><path d="M.5 .5H8.5V7L4.5 11L.5 7Z" fill="#eef3fb" stroke="#5a6f95"/></svg>
<div class="b" style="left:1107px;top:704px;width:10px;height:10px;border-radius:50%;border:1px solid #5a6f95;background:linear-gradient(#f8fbff,#c9d9ee);box-sizing:border-box"></div>
<div class="b" style="left:1109px;top:708px;width:6px;height:1.5px;background:#3a4a6a;"></div>
<div class="b" style="left:1111px;top:706px;width:1.5px;height:6px;background:#3a4a6a;"></div>
<div class="b" style="left:0px;top:0px;width:1124px;height:1px;background:#fff;"></div>
<div class="b" style="left:0px;top:0px;width:1px;height:718px;background:#fff;"></div>
<div class="b" style="left:1122.5px;top:0px;width:1.5px;height:718px;background:#fff;"></div>
<div class="t" style="left:137.5px;top:736px;font-size:17.7px;font-weight:bold;color:#111;white-space:nowrap;">Acceso a los servicios y atención en salud</div>
<div class="b gl" style="left:26px;top:899.0px;width:582px;"></div>
<div class="b gl" style="left:26px;top:873.4px;width:582px;"></div>
<div class="b gl" style="left:26px;top:847.9px;width:582px;"></div>
<div class="b gl" style="left:26px;top:822.3px;width:582px;"></div>
<div class="b gl" style="left:26px;top:796.8px;width:582px;"></div>
<div class="b gl" style="left:26px;top:771.3px;width:582px;"></div>
<div class="b" style="left:34.5px;top:846.3px;width:26.5px;height:78.7px;background:#c0504d"></div>
<div class="t" style="left:17.8px;top:827.7px;width:60px;text-align:center;font-size:11px;color:#111;font-weight:bold;">61.6%</div>
<div class="b" style="left:76.0px;top:797.3px;width:26.5px;height:127.7px;background:#4f81bd"></div>
<div class="t" style="left:59.2px;top:778.7px;width:60px;text-align:center;font-size:11px;color:#111;">100.0%</div>
<div class="t" style="left:59.2px;top:932.9px;width:60px;text-align:center;font-size:13.5px;font-weight:bold;color:#111;">1</div>
<div class="b" style="left:117.5px;top:797.3px;width:26.5px;height:127.7px;background:#4f81bd"></div>
<div class="t" style="left:100.8px;top:778.7px;width:60px;text-align:center;font-size:11px;color:#111;">100.0%</div>
<div class="t" style="left:100.8px;top:932.9px;width:60px;text-align:center;font-size:13.5px;font-weight:bold;color:#111;">2</div>
<div class="b" style="left:159.0px;top:797.3px;width:26.5px;height:127.7px;background:#4f81bd"></div>
<div class="t" style="left:142.2px;top:778.7px;width:60px;text-align:center;font-size:11px;color:#111;">100.0%</div>
<div class="t" style="left:142.2px;top:932.9px;width:60px;text-align:center;font-size:13.5px;font-weight:bold;color:#111;">3</div>
<div class="b" style="left:200.5px;top:833.8px;width:26.5px;height:91.2px;background:#4f81bd"></div>
<div class="t" style="left:183.8px;top:815.2px;width:60px;text-align:center;font-size:11px;color:#111;">71.4%</div>
<div class="t" style="left:183.8px;top:932.9px;width:60px;text-align:center;font-size:13.5px;font-weight:bold;color:#111;">4</div>
<div class="t" style="left:225.2px;top:906.4px;width:60px;text-align:center;font-size:11px;color:#111;">0.0%</div>
<div class="t" style="left:225.2px;top:932.9px;width:60px;text-align:center;font-size:13.5px;font-weight:bold;color:#111;">5</div>
<div class="b" style="left:283.5px;top:873.9px;width:26.5px;height:51.1px;background:#4f81bd"></div>
<div class="t" style="left:266.8px;top:855.3px;width:60px;text-align:center;font-size:11px;color:#111;">40.0%</div>
<div class="t" style="left:266.8px;top:932.9px;width:60px;text-align:center;font-size:13.5px;font-weight:bold;color:#111;">6</div>
<div class="b" style="left:325.0px;top:797.3px;width:26.5px;height:127.7px;background:#4f81bd"></div>
<div class="t" style="left:308.2px;top:778.7px;width:60px;text-align:center;font-size:11px;color:#111;">100.0%</div>
<div class="t" style="left:308.2px;top:932.9px;width:60px;text-align:center;font-size:13.5px;font-weight:bold;color:#111;">7</div>
<div class="b" style="left:366.5px;top:899.5px;width:26.5px;height:25.5px;background:#4f81bd"></div>
<div class="t" style="left:349.8px;top:880.9px;width:60px;text-align:center;font-size:11px;color:#111;">20.0%</div>
<div class="t" style="left:349.8px;top:932.9px;width:60px;text-align:center;font-size:13.5px;font-weight:bold;color:#111;">8</div>
<div class="b" style="left:408.0px;top:816.5px;width:26.5px;height:108.5px;background:#4f81bd"></div>
<div class="t" style="left:391.2px;top:797.9px;width:60px;text-align:center;font-size:11px;color:#111;">85.0%</div>
<div class="t" style="left:391.2px;top:932.9px;width:60px;text-align:center;font-size:13.5px;font-weight:bold;color:#111;">9</div>
<div class="b" style="left:449.5px;top:797.3px;width:26.5px;height:127.7px;background:#4f81bd"></div>
<div class="t" style="left:432.8px;top:778.7px;width:60px;text-align:center;font-size:11px;color:#111;">100.0%</div>
<div class="t" style="left:432.8px;top:932.9px;width:60px;text-align:center;font-size:13.5px;font-weight:bold;color:#111;">10</div>
<div class="b" style="left:491.0px;top:924.0px;width:26.5px;height:1px;background:#8a98ad"></div>
<div class="t" style="left:474.2px;top:906.4px;width:60px;text-align:center;font-size:11px;color:#111;">0.0%</div>
<div class="t" style="left:474.2px;top:932.9px;width:60px;text-align:center;font-size:13.5px;font-weight:bold;color:#111;">11</div>
<div class="b" style="left:532.5px;top:893.1px;width:26.5px;height:31.9px;background:#4f81bd"></div>
<div class="t" style="left:515.8px;top:874.5px;width:60px;text-align:center;font-size:11px;color:#111;">25.0%</div>
<div class="t" style="left:515.8px;top:932.9px;width:60px;text-align:center;font-size:13.5px;font-weight:bold;color:#111;">12</div>
<div class="b" style="left:574.0px;top:848.4px;width:26.5px;height:76.6px;background:#4f81bd"></div>
<div class="t" style="left:557.2px;top:829.8px;width:60px;text-align:center;font-size:11px;color:#111;">60.0%</div>
<div class="t" style="left:557.2px;top:932.9px;width:60px;text-align:center;font-size:13.5px;font-weight:bold;color:#111;">13</div>
<div class="b" style="left:26px;top:924.5px;width:583px;height:1px;background:#868686;"></div>
<div class="b" style="left:26px;top:925.0px;width:1px;height:5px;background:#868686;"></div>
<div class="b" style="left:68px;top:925.0px;width:1px;height:5px;background:#868686;"></div>
<div class="b" style="left:110px;top:925.0px;width:1px;height:5px;background:#868686;"></div>
<div class="b" style="left:151px;top:925.0px;width:1px;height:5px;background:#868686;"></div>
<div class="b" style="left:192px;top:925.0px;width:1px;height:5px;background:#868686;"></div>
<div class="b" style="left:234px;top:925.0px;width:1px;height:5px;background:#868686;"></div>
<div class="b" style="left:276px;top:925.0px;width:1px;height:5px;background:#868686;"></div>
<div class="b" style="left:317px;top:925.0px;width:1px;height:5px;background:#868686;"></div>
<div class="b" style="left:358px;top:925.0px;width:1px;height:5px;background:#868686;"></div>
<div class="b" style="left:400px;top:925.0px;width:1px;height:5px;background:#868686;"></div>
<div class="b" style="left:442px;top:925.0px;width:1px;height:5px;background:#868686;"></div>
<div class="b" style="left:483px;top:925.0px;width:1px;height:5px;background:#868686;"></div>
<div class="b" style="left:524px;top:925.0px;width:1px;height:5px;background:#868686;"></div>
<div class="b" style="left:566px;top:925.0px;width:1px;height:5px;background:#868686;"></div>
<div class="b" style="left:608px;top:925.0px;width:1px;height:5px;background:#868686;"></div>
<div class="t" style="left:660px;top:742px;width:406px;text-align:center;font-size:17.7px;line-height:25.9px;font-weight:bold;color:#111;"><span style="word-spacing:2.4px">Adecuación de la oferta institucional -</span><br>Gasto</div>
<div class="b gl" style="left:629px;top:904.9px;width:468px;"></div>
<div class="b gl" style="left:629px;top:885.2px;width:468px;"></div>
<div class="b gl" style="left:629px;top:865.6px;width:468px;"></div>
<div class="b gl" style="left:629px;top:845.9px;width:468px;"></div>
<div class="b gl" style="left:629px;top:826.3px;width:468px;"></div>
<div class="b gl" style="left:629px;top:806.7px;width:468px;"></div>
<div class="b" style="left:649.7px;top:892.3px;width:76px;height:32.7px;background:#c0504d"></div>
<div class="t" style="left:657.7px;top:871.8px;width:60px;text-align:center;font-size:11.8px;color:#111;font-weight:bold;">33.3%</div>
<div class="t" style="left:657.7px;top:932.9px;width:60px;text-align:center;font-size:13.5px;font-weight:bold;color:#111;">Gasto</div>
<div class="t" style="left:774.5px;top:904.5px;width:60px;text-align:center;font-size:11.8px;color:#111;">0.0%</div>
<div class="t" style="left:774.5px;top:932.9px;width:60px;text-align:center;font-size:13.5px;font-weight:bold;color:#111;">48</div>
<div class="b" style="left:883.3px;top:826.8px;width:76px;height:98.2px;background:#4f81bd"></div>
<div class="t" style="left:891.3px;top:806.3px;width:60px;text-align:center;font-size:11.8px;color:#111;">100.0%</div>
<div class="t" style="left:891.3px;top:932.9px;width:60px;text-align:center;font-size:13.5px;font-weight:bold;color:#111;">49</div>
<div class="t" style="left:1008.1px;top:904.5px;width:60px;text-align:center;font-size:11.8px;color:#111;">0.0%</div>
<div class="t" style="left:1008.1px;top:932.9px;width:60px;text-align:center;font-size:13.5px;font-weight:bold;color:#111;">50</div>
<div class="b" style="left:629px;top:924.5px;width:468px;height:1px;background:#868686;"></div>
<div class="b" style="left:629px;top:925.0px;width:1px;height:5px;background:#868686;"></div>
<div class="b" style="left:746px;top:925.0px;width:1px;height:5px;background:#868686;"></div>
<div class="b" style="left:862px;top:925.0px;width:1px;height:5px;background:#868686;"></div>
<div class="b" style="left:979px;top:925.0px;width:1px;height:5px;background:#868686;"></div>
<div class="b" style="left:1096px;top:925.0px;width:1px;height:5px;background:#868686;"></div>
</div></body></html>
